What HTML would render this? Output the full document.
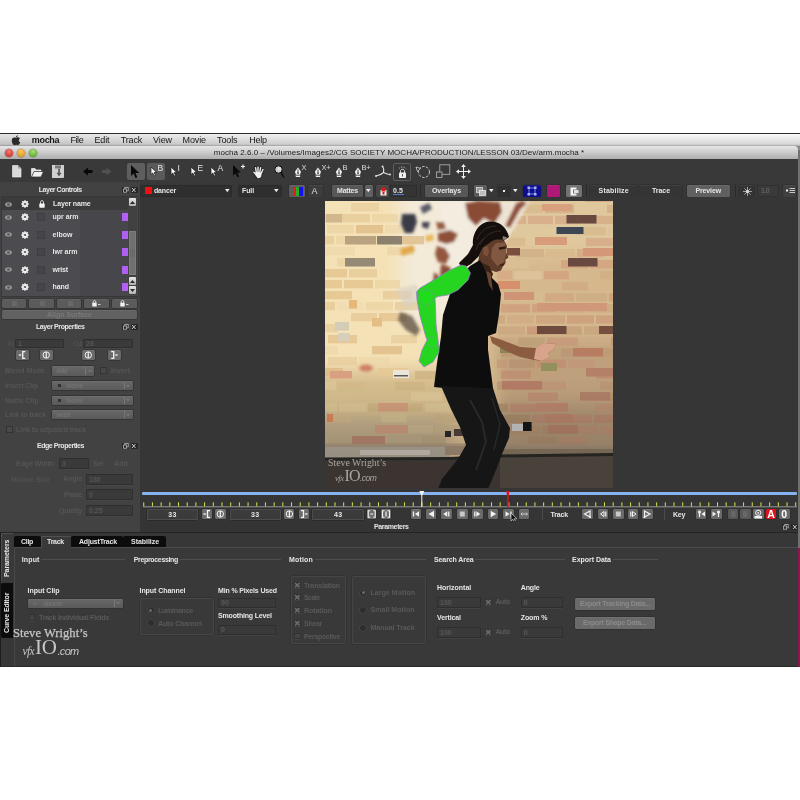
<!DOCTYPE html>
<html><head><meta charset="utf-8"><title>mocha</title>
<style>
html,body{margin:0;padding:0}
body{width:800px;height:800px;background:#fff;position:relative;overflow:hidden;font-family:"Liberation Sans",sans-serif}
.a{position:absolute}
.t{position:absolute;white-space:nowrap;line-height:1}
svg{position:absolute;overflow:visible}
</style></head><body>
<div id="root" style="position:absolute;left:0;top:0;width:800px;height:800px;will-change:transform">
<div class="a" style="left:0px;top:133px;width:800px;height:1px;background:#2c2c2c;"></div>
<div class="a" style="left:0px;top:134px;width:800px;height:12px;background:linear-gradient(to right,rgba(0,0,0,.09),rgba(0,0,0,0) 65%),linear-gradient(#fbfbfb 0%,#ececec 35%,#d6d6d8 85%,#a6a6a6 100%);"></div>
<div class="a" style="left:790px;top:146px;width:10px;height:6px;background:#8a8a8a;"></div>
<div class="a" style="left:0px;top:146px;width:798px;height:13px;background:linear-gradient(#e6e6e6,#d0d0d0 40%,#aeaeae);border-top-right-radius:4px"></div>
<div class="a" style="left:0px;top:159px;width:798px;height:508px;background:#383838;"></div>
<div class="a" style="left:798px;top:150px;width:2px;height:517px;background:#707070;"></div>
<svg style="left:11px;top:134.5px" width="10" height="11" viewBox="0 0 20 22"><path d="M13.5 0.5c0.2 1.8-1.6 4.2-3.6 4.1C9.7 2.8 11.6 0.7 13.5 0.500zM10 5.600c1.200 0 2.300-1 3.900-1c1.500 0 3 0.800 3.900 2.200c-3.300 1.900-2.800 6.600 0.700 7.900c-0.800 2.200-2.800 5.700-4.800 5.700c-1.300 0-1.900-0.800-3.500-0.800c-1.600 0-2.300 0.800-3.500 0.800C4.300 20.400 1.500 15.600 1.500 11.500c0-4 2.600-6.300 5-6.300c1.500 0 2.600 0.400 3.500 0.400z" fill="#2a2a2a"/></svg>
<span class="t" style="left:31.75px;top:135.8px;font-size:9px;color:#161616;font-weight:bold;letter-spacing:-0.30px;">mocha</span>
<span class="t" style="left:70.5px;top:135.8px;font-size:9px;color:#161616;font-weight:normal;letter-spacing:-0.44px;">File</span>
<span class="t" style="left:94.5px;top:135.8px;font-size:9px;color:#161616;font-weight:normal;letter-spacing:-0.19px;">Edit</span>
<span class="t" style="left:120.75px;top:135.8px;font-size:9px;color:#161616;font-weight:normal;letter-spacing:-0.18px;">Track</span>
<span class="t" style="left:153px;top:135.8px;font-size:9px;color:#161616;font-weight:normal;letter-spacing:-0.09px;">View</span>
<span class="t" style="left:182.5px;top:135.8px;font-size:9px;color:#161616;font-weight:normal;letter-spacing:-0.10px;">Movie</span>
<span class="t" style="left:217px;top:135.8px;font-size:9px;color:#161616;font-weight:normal;letter-spacing:-0.10px;">Tools</span>
<span class="t" style="left:249.25px;top:135.8px;font-size:9px;color:#161616;font-weight:normal;letter-spacing:-0.25px;">Help</span>
<div class="a" style="left:5px;top:149px;width:8px;height:8px;background:radial-gradient(circle at 50% 30%,#f47a70,#c8221c);border-radius:50%;box-shadow:0 0 0 0.5px rgba(0,0,0,.35)"></div>
<div class="a" style="left:17px;top:149px;width:8px;height:8px;background:radial-gradient(circle at 50% 30%,#f8c860,#d88a10);border-radius:50%;box-shadow:0 0 0 0.5px rgba(0,0,0,.35)"></div>
<div class="a" style="left:29px;top:149px;width:8px;height:8px;background:radial-gradient(circle at 50% 30%,#a8e070,#48a020);border-radius:50%;box-shadow:0 0 0 0.5px rgba(0,0,0,.35)"></div>
<span class="t" style="left:213.75px;top:149.3px;font-size:8px;color:#202020;font-weight:normal;letter-spacing:0.03px;">mocha 2.6.0 – /Volumes/Images2/CG SOCIETY MOCHA/PRODUCTION/LESSON 03/Dev/arm.mocha *</span>
<div class="a" style="left:0px;top:159px;width:798px;height:23px;background:#393939;"></div>
<div class="a" style="left:0px;top:181.5px;width:798px;height:1px;background:#464646;"></div>
<svg style="left:12px;top:165px" width="10" height="13" viewBox="0 0 10 13"><path d="M0.500 0.500h5.500l3 3v8.500h-8.500z" fill="#d8d8d8" stroke="#f4f4f4" stroke-width="0.600"/><path d="M6 0.500v3h3" fill="#9a9a9a"/></svg>
<svg style="left:31px;top:167px" width="13" height="11" viewBox="0 0 13 11"><path d="M0.500 9.500v-8h3.500l1 1.500h5v2" fill="#e4e4e4" stroke="#e4e4e4" stroke-width="0.800"/><path d="M0.500 10l2.500-5.500h9.500l-2.500 5.500z" fill="#f0f0f0" stroke="#2a2a2a" stroke-width="0.700"/></svg>
<svg style="left:52px;top:165px" width="12" height="13" viewBox="0 0 12 13"><rect x="0.500" y="0.500" width="11" height="12" fill="#cfcfcf" stroke="#eee" stroke-width="0.700"/><rect x="3" y="0.500" width="6" height="3" fill="#777"/><path d="M7.500 4v4h1.500l-2 3l-2-3h1.500v-4z" fill="#555" stroke="#333" stroke-width="0.400"/></svg>
<svg style="left:83px;top:167px" width="10" height="9" viewBox="0 0 10 9"><path d="M0 4.500l5-4v2.500h4.500v3h-4.500v2.500z" fill="#080808"/></svg>
<svg style="left:102px;top:167px" width="10" height="9" viewBox="0 0 10 9"><path d="M9.500 4.500l-5-4v2.500h-4.500v3h4.500v2.500z" fill="#505050"/></svg>
<div class="a" style="left:126.5px;top:162.5px;width:18.5px;height:17px;background:#5e5e5e;border-radius:2px"></div>
<div class="a" style="left:147px;top:162.5px;width:18px;height:17px;background:#5a5a5a;border-radius:2px"></div>
<svg style="left:131px;top:165px" width="9" height="14" viewBox="0 0 9 14"><path d="M0 0v11l2.600-2.400l1.900 4.400l1.900-0.800l-1.900-4.300h3.700z" fill="#0a0a0a"/></svg>
<svg style="left:151px;top:166.5px" width="7" height="10" viewBox="0 0 7 10"><path d="M0 0v11l2.600-2.400l1.900 4.400l1.900-0.800l-1.900-4.300h3.700z" fill="#f4f4f4" stroke="#1c1c1c" stroke-width="1" transform="scale(0.7)"/></svg>
<span class="t" style="left:157.5px;top:164.1px;font-size:8.5px;color:#e4e4e4;font-weight:normal;">B</span>
<svg style="left:171px;top:166.5px" width="7" height="10" viewBox="0 0 7 10"><path d="M0 0v11l2.600-2.400l1.900 4.400l1.900-0.800l-1.900-4.300h3.700z" fill="#f4f4f4" stroke="#1c1c1c" stroke-width="1" transform="scale(0.7)"/></svg>
<span class="t" style="left:177.5px;top:164.1px;font-size:8.5px;color:#e4e4e4;font-weight:normal;">I</span>
<svg style="left:191px;top:166.5px" width="7" height="10" viewBox="0 0 7 10"><path d="M0 0v11l2.600-2.400l1.900 4.400l1.900-0.800l-1.900-4.300h3.700z" fill="#f4f4f4" stroke="#1c1c1c" stroke-width="1" transform="scale(0.7)"/></svg>
<span class="t" style="left:197.5px;top:164.1px;font-size:8.5px;color:#e4e4e4;font-weight:normal;">E</span>
<svg style="left:211px;top:166.5px" width="7" height="10" viewBox="0 0 7 10"><path d="M0 0v11l2.600-2.400l1.900 4.400l1.900-0.800l-1.900-4.300h3.700z" fill="#f4f4f4" stroke="#1c1c1c" stroke-width="1" transform="scale(0.7)"/></svg>
<span class="t" style="left:217.5px;top:164.1px;font-size:8.5px;color:#e4e4e4;font-weight:normal;">A</span>
<svg style="left:233px;top:164px" width="12" height="14" viewBox="0 0 12 14"><path d="M0 0v11l2.600-2.400l1.900 4.400l1.900-0.800l-1.900-4.300h3.700z" fill="#0a0a0a" transform="translate(0,1) scale(0.95)"/><path d="M8 2.500h4M10 0.500v4" stroke="#f0f0f0" stroke-width="1.200"/></svg>
<svg style="left:252.5px;top:165.5px" width="11" height="13" viewBox="0 0 11 13"><path d="M3.300 6.500L2.600 1.600M5 6L5 0.900M6.800 6.200L7.600 1.600M8.400 7L9.900 3.400M3 8.600L0.900 6.200" stroke="#1a1a1a" stroke-width="2.600" stroke-linecap="round" fill="none"/><path d="M2.600 5.800L8.900 6.400L8.200 10.800Q6.200 13 4.400 12L2.300 9Z" fill="#1a1a1a" stroke="#1a1a1a" stroke-width="1.400"/><path d="M3.300 6.500L2.600 1.600M5 6L5 0.900M6.800 6.200L7.600 1.600M8.400 7L9.900 3.400M3 8.600L0.900 6.200" stroke="#f2f2f2" stroke-width="1.400" stroke-linecap="round" fill="none"/><path d="M2.600 5.800L8.900 6.400L8.200 10.800Q6.200 13 4.400 12L2.300 9Z" fill="#f2f2f2"/></svg>
<svg style="left:273.7px;top:164.7px" width="11" height="13" viewBox="0 0 11 13"><circle cx="4.500" cy="4.500" r="3.700" fill="#cfcfcf" stroke="#0c0c0c" stroke-width="1"/><circle cx="5.500" cy="3.500" r="1.600" fill="#e6e6e6"/><path d="M7.300 7.600l2.300 4.400" stroke="#0c0c0c" stroke-width="1.500" stroke-linecap="round"/></svg>
<svg style="left:293.5px;top:167px" width="8" height="11" viewBox="0 0 8 11"><path d="M2 11.500h5v-3.500l1-2.500l-3.500-5l-3.500 5l1 2.500z" fill="#f2f2f2" transform="scale(0.88)"/><path d="M4 2.500v3.500" stroke="#222" stroke-width="0.800"/><circle cx="4" cy="6.200" r="0.800" fill="#222"/><path d="M1.800 8.200h4.400" stroke="#222" stroke-width="0.800"/></svg>
<span class="t" style="left:301.5px;top:163.6px;font-size:7.5px;color:#dcdcdc;font-weight:normal;letter-spacing:-0.300px">X</span>
<svg style="left:313.5px;top:167px" width="8" height="11" viewBox="0 0 8 11"><path d="M2 11.500h5v-3.500l1-2.500l-3.500-5l-3.500 5l1 2.500z" fill="#f2f2f2" transform="scale(0.88)"/><path d="M4 2.500v3.500" stroke="#222" stroke-width="0.800"/><circle cx="4" cy="6.200" r="0.800" fill="#222"/><path d="M1.800 8.200h4.400" stroke="#222" stroke-width="0.800"/></svg>
<span class="t" style="left:321.5px;top:163.6px;font-size:7.5px;color:#dcdcdc;font-weight:normal;letter-spacing:-0.300px">X+</span>
<svg style="left:334.5px;top:167px" width="8" height="11" viewBox="0 0 8 11"><path d="M2 11.500h5v-3.500l1-2.500l-3.500-5l-3.500 5l1 2.500z" fill="#f2f2f2" transform="scale(0.88)"/><path d="M4 2.500v3.500" stroke="#222" stroke-width="0.800"/><circle cx="4" cy="6.200" r="0.800" fill="#222"/><path d="M1.800 8.200h4.400" stroke="#222" stroke-width="0.800"/></svg>
<span class="t" style="left:342.5px;top:163.6px;font-size:7.5px;color:#dcdcdc;font-weight:normal;letter-spacing:-0.300px">B</span>
<svg style="left:353.5px;top:167px" width="8" height="11" viewBox="0 0 8 11"><path d="M2 11.500h5v-3.500l1-2.500l-3.500-5l-3.500 5l1 2.500z" fill="#f2f2f2" transform="scale(0.88)"/><path d="M4 2.500v3.500" stroke="#222" stroke-width="0.800"/><circle cx="4" cy="6.200" r="0.800" fill="#222"/><path d="M1.800 8.200h4.400" stroke="#222" stroke-width="0.800"/></svg>
<span class="t" style="left:361.5px;top:163.6px;font-size:7.5px;color:#dcdcdc;font-weight:normal;letter-spacing:-0.300px">B+</span>
<svg style="left:374px;top:165px" width="18" height="13" viewBox="0 0 18 13"><path d="M2 11c3-0.500 5.500-1.500 7.500-3.500M9.500 7.500c0.500-2.500 0.500-4.500-1-6.500M9.500 7.500c2 1 4 2.200 6.500 2" fill="none" stroke="#e4e4e4" stroke-width="1.100"/><circle cx="2" cy="11" r="0.900" fill="#e4e4e4"/><circle cx="8.500" cy="1.500" r="0.900" fill="#e4e4e4"/><circle cx="16" cy="9.500" r="0.900" fill="#e4e4e4"/></svg>
<div class="a" style="left:393px;top:162.5px;width:17.5px;height:18px;background:transparent;border:0.8px solid #5e5e5e;border-radius:2px;box-sizing:border-box"></div>
<svg style="left:398px;top:165px" width="9" height="14" viewBox="0 0 9 14"><path d="M1 3.500c1.500-2 5.500-2 7 0" fill="none" stroke="#c8c8c8" stroke-width="0.700" stroke-dasharray="1.500 0.800"/><path d="M2.500 8v-1.800c0-2.600 4-2.600 4 0v1.800" fill="none" stroke="#ececec" stroke-width="0.900"/><rect x="1" y="7.500" width="7" height="5.500" rx="0.800" fill="#f0f0f0"/><rect x="4" y="9" width="1" height="2.500" fill="#555"/></svg>
<svg style="left:415px;top:164px" width="16" height="15" viewBox="0 0 16 15"><circle cx="9" cy="8" r="5.500" fill="none" stroke="#d4d4d4" stroke-width="0.900" stroke-dasharray="2.600 1.300"/><path d="M1 3l4.500 1.500l-3 3z" fill="#343434" stroke="#d4d4d4" stroke-width="0.800"/></svg>
<svg style="left:436px;top:164px" width="15" height="15" viewBox="0 0 15 15"><rect x="3.800" y="0.800" width="10" height="9.500" fill="none" stroke="#b4b4b4" stroke-width="0.800"/><rect x="0.500" y="8" width="5.500" height="5.500" fill="#3c3c3c" stroke="#b4b4b4" stroke-width="0.800"/></svg>
<svg style="left:456px;top:164px" width="15" height="15" viewBox="0 0 15 15"><path d="M7.500 1v13M1 7.500h13" stroke="#f0f0f0" stroke-width="1"/><path d="M7.500 0l-2.300 3h4.600zM7.500 15l-2.300-3h4.600zM0 7.500l3-2.300v4.600zM15 7.500l-3-2.300v4.600z" fill="#f0f0f0"/></svg>
<div class="a" style="left:0px;top:182px;width:798px;height:15px;background:#383838;"></div>
<div class="a" style="left:140px;top:185px;width:92px;height:12px;background:#2f2f2f;border-radius:2px;box-shadow:inset 0 0 0 0.5px #262626, 0 0.5px 0 #4a4a4a"></div>
<div class="a" style="left:145px;top:187px;width:6.5px;height:6.5px;background:#f01010;"></div>
<span class="t" style="left:154px;top:186.7px;font-size:7px;color:#e6e6e6;font-weight:bold;letter-spacing:-0.16px;">dancer</span>
<svg style="left:225px;top:189px" width="4.6" height="3.2" viewBox="0 0 4.6 3.2"><path d="M0 0h4.6l-2.3 3.2z" fill="#ececec"/></svg>
<div class="a" style="left:238px;top:185px;width:44px;height:12px;background:#2f2f2f;border-radius:2px;box-shadow:inset 0 0 0 0.5px #262626, 0 0.5px 0 #4a4a4a"></div>
<span class="t" style="left:242px;top:186.7px;font-size:7px;color:#e6e6e6;font-weight:bold;letter-spacing:-0.11px;">Full</span>
<svg style="left:274px;top:189px" width="4.6" height="3.2" viewBox="0 0 4.6 3.2"><path d="M0 0h4.6l-2.3 3.2z" fill="#ececec"/></svg>
<div class="a" style="left:289px;top:185px;width:16px;height:11.5px;background:#5c5c5c;border-radius:1.500px;box-shadow:inset 0 0.500px 0 rgba(255,255,255,.12),0 0 0 0.500px #2a2a2a;"></div>
<div class="a" style="left:293px;top:186.5px;width:3px;height:9px;background:#e02020;"></div>
<div class="a" style="left:296px;top:186.5px;width:3px;height:9px;background:#20b020;"></div>
<div class="a" style="left:299px;top:186.5px;width:3.5px;height:9px;background:#1010f0;"></div>
<div class="a" style="left:308px;top:185px;width:15px;height:11.5px;background:#3c3c3c;border-radius:1.500px;box-shadow:inset 0 0.500px 0 rgba(255,255,255,.12),0 0 0 0.500px #2a2a2a;"></div>
<span class="t" style="left:311.5px;top:186.6px;font-size:9px;color:#dcdcdc;font-weight:normal;">A</span>
<div class="a" style="left:332px;top:185px;width:30.5px;height:11.5px;background:#575757;border-radius:1.500px;box-shadow:inset 0 0.500px 0 rgba(255,255,255,.12),0 0 0 0.500px #2a2a2a;"></div>
<span class="t" style="left:337px;top:186.7px;font-size:7px;color:#e6e6e6;font-weight:bold;letter-spacing:-0.20px;">Mattes</span>
<div class="a" style="left:365px;top:185px;width:7.5px;height:11.5px;background:#606060;border-radius:1.500px;box-shadow:inset 0 0.500px 0 rgba(255,255,255,.12),0 0 0 0.500px #2a2a2a;"></div>
<svg style="left:366.3px;top:189px" width="4.6" height="3.2" viewBox="0 0 4.6 3.2"><path d="M0 0h4.6l-2.3 3.2z" fill="#ececec"/></svg>
<div class="a" style="left:376px;top:185px;width:13px;height:11.5px;background:#474747;border-radius:1.500px;box-shadow:inset 0 0.500px 0 rgba(255,255,255,.12),0 0 0 0.500px #2a2a2a;"></div>
<svg style="left:380px;top:186.5px" width="7" height="9" viewBox="0 0 7 9"><rect x="0.500" y="3" width="6" height="5.500" fill="#f0f0f0"/><rect x="1.500" y="0.500" width="4" height="4" fill="#e01818"/><rect x="2.500" y="5" width="2" height="2.500" fill="#c02020"/></svg>
<div class="a" style="left:389.5px;top:185px;width:27px;height:12px;background:#343434;border-radius:2px;box-shadow:inset 0 0 0 0.5px #262626, 0 0.5px 0 #4a4a4a"></div>
<span class="t" style="left:393px;top:186.7px;font-size:7px;color:#e6e6e6;font-weight:bold;letter-spacing:0.09px;">0.5</span>
<div class="a" style="left:392.5px;top:194px;width:11px;height:0.8px;background:#5a78c8;"></div>
<div class="a" style="left:420px;top:184px;width:1px;height:13px;background:#2a2a2a;"></div>
<div class="a" style="left:425px;top:185px;width:43px;height:11.5px;background:#575757;border-radius:1.500px;box-shadow:inset 0 0.500px 0 rgba(255,255,255,.12),0 0 0 0.500px #2a2a2a;"></div>
<span class="t" style="left:432px;top:186.7px;font-size:7px;color:#e6e6e6;font-weight:bold;letter-spacing:-0.07px;">Overlays</span>
<div class="a" style="left:474px;top:185px;width:13px;height:11.5px;background:#5a5a5a;border-radius:1.500px;box-shadow:inset 0 0.500px 0 rgba(255,255,255,.12),0 0 0 0.500px #2a2a2a;"></div>
<svg style="left:476px;top:186.5px" width="10" height="9" viewBox="0 0 10 9"><rect x="0.500" y="0.500" width="6" height="5" fill="#999" stroke="#e8e8e8" stroke-width="0.700"/><rect x="3.500" y="3.500" width="6" height="5" fill="#bbb" stroke="#f4f4f4" stroke-width="0.700"/></svg>
<svg style="left:489px;top:189px" width="4.6" height="3.2" viewBox="0 0 4.6 3.2"><path d="M0 0h4.6l-2.3 3.2z" fill="#ececec"/></svg>
<div class="a" style="left:498px;top:185px;width:12px;height:11.5px;background:#303030;border-radius:1.500px;box-shadow:inset 0 0.500px 0 rgba(255,255,255,.12),0 0 0 0.500px #2a2a2a;"></div>
<div class="a" style="left:503px;top:189.5px;width:2px;height:2px;background:#f0f0f0;"></div>
<div class="a" style="left:504.5px;top:188.8px;width:1px;height:1px;background:#d02020;"></div>
<svg style="left:512.5px;top:189px" width="4.6" height="3.2" viewBox="0 0 4.6 3.2"><path d="M0 0h4.6l-2.3 3.2z" fill="#ececec"/></svg>
<div class="a" style="left:523px;top:185px;width:17.5px;height:11.5px;background:#0e0e8c;border-radius:1.500px;box-shadow:inset 0 0.500px 0 rgba(255,255,255,.12),0 0 0 0.500px #2a2a2a;"></div>
<svg style="left:527px;top:186px" width="10" height="10" viewBox="0 0 10 10"><rect x="2" y="2" width="6" height="6" fill="none" stroke="#8898e8" stroke-width="0.900"/><path d="M0.500 0.500h2.500v2.500h-2.500zM7 0.500h2.500v2.500h-2.500zM0.500 7h2.500v2.500h-2.500zM7 7h2.500v2.500h-2.500z" fill="#a8b4f0"/></svg>
<div class="a" style="left:547px;top:185px;width:12.5px;height:11.5px;background:#b01878;border-radius:1.500px;box-shadow:inset 0 0.500px 0 rgba(255,255,255,.12),0 0 0 0.500px #2a2a2a;"></div>
<div class="a" style="left:566px;top:185px;width:16px;height:11.5px;background:#727272;border-radius:1.500px;box-shadow:inset 0 0.500px 0 rgba(255,255,255,.12),0 0 0 0.500px #2a2a2a;"></div>
<svg style="left:569.5px;top:186.5px" width="9" height="9" viewBox="0 0 9 9"><path d="M0.500 0.500h6v2h-3.500v4h3.500v2h-6z" fill="#f4f4f4"/><rect x="4" y="3" width="4.500" height="3" fill="#e0e0e0"/></svg>
<div class="a" style="left:586px;top:184px;width:1px;height:13px;background:#2a2a2a;"></div>
<div class="a" style="left:590px;top:185px;width:47px;height:11.5px;background:#353535;border-radius:1.500px;box-shadow:inset 0 0.500px 0 rgba(255,255,255,.12),0 0 0 0.500px #2a2a2a;"></div>
<span class="t" style="left:598.5px;top:186.7px;font-size:7px;color:#e6e6e6;font-weight:bold;letter-spacing:0.23px;">Stabilize</span>
<div class="a" style="left:640px;top:185px;width:42px;height:11.5px;background:#353535;border-radius:1.500px;box-shadow:inset 0 0.500px 0 rgba(255,255,255,.12),0 0 0 0.500px #2a2a2a;"></div>
<span class="t" style="left:652px;top:186.7px;font-size:7px;color:#e6e6e6;font-weight:bold;letter-spacing:-0.06px;">Trace</span>
<div class="a" style="left:687px;top:185px;width:42.5px;height:11.5px;background:#606060;border-radius:1.500px;box-shadow:inset 0 0.500px 0 rgba(255,255,255,.12),0 0 0 0.500px #2a2a2a;"></div>
<span class="t" style="left:695.5px;top:186.7px;font-size:7px;color:#e6e6e6;font-weight:bold;letter-spacing:-0.14px;">Preview</span>
<div class="a" style="left:735px;top:184px;width:1px;height:13px;background:#2a2a2a;"></div>
<div class="a" style="left:739px;top:185px;width:15px;height:11.5px;background:#333;border-radius:1.500px;box-shadow:inset 0 0.500px 0 rgba(255,255,255,.12),0 0 0 0.500px #2a2a2a;"></div>
<svg style="left:742.5px;top:186.5px" width="9" height="9" viewBox="0 0 9 9"><circle cx="4.500" cy="4.500" r="1.800" fill="#dcdcdc"/><path d="M4.500 0v9M0 4.500h9M1.300 1.300l6.400 6.400M7.700 1.300l-6.400 6.400" stroke="#cfcfcf" stroke-width="0.700"/></svg>
<div class="a" style="left:757px;top:185px;width:22px;height:12px;background:#3a3a3a;border-radius:2px;box-shadow:inset 0 0 0 0.5px #262626, 0 0.5px 0 #4a4a4a"></div>
<span class="t" style="left:761px;top:186.7px;font-size:7px;color:#606060;font-weight:bold;letter-spacing:-0.58px;">1.0</span>
<div class="a" style="left:783px;top:185px;width:13px;height:11.5px;background:#404040;border-radius:1.500px;box-shadow:inset 0 0.500px 0 rgba(255,255,255,.12),0 0 0 0.500px #2a2a2a;"></div>
<svg style="left:785.5px;top:187px" width="9" height="8" viewBox="0 0 9 8"><rect x="0" y="2.500" width="2" height="2" fill="#f0f0f0"/><path d="M3.500 1.500h5.500M3.500 3.500h5.500M3.500 5.500h5.500" stroke="#c8c8c8" stroke-width="1"/></svg>
<div class="a" style="left:140px;top:197px;width:658px;height:294px;background:#363636;"></div>
<svg style="left:325px;top:201px" width="288" height="287" viewBox="325 201 288 287"><defs><clipPath id="pc"><rect x="325" y="201" width="288" height="287"/></clipPath><filter id="b8" x="-20%" y="-20%" width="140%" height="140%"><feGaussianBlur stdDeviation="8"/></filter><filter id="b4" x="-20%" y="-20%" width="140%" height="140%"><feGaussianBlur stdDeviation="4"/></filter><filter id="b2" x="-20%" y="-20%" width="140%" height="140%"><feGaussianBlur stdDeviation="1.6"/></filter><filter id="b1" x="-20%" y="-20%" width="140%" height="140%"><feGaussianBlur stdDeviation="0.7"/></filter><filter id="b05" x="-10%" y="-10%" width="120%" height="120%"><feGaussianBlur stdDeviation="0.45"/></filter><linearGradient id="vg" x1="0" y1="0" x2="0" y2="1"><stop offset="0.62" stop-color="#000" stop-opacity="0"/><stop offset="0.9" stop-color="#000" stop-opacity="0.14"/></linearGradient></defs><g clip-path="url(#pc)"><rect x="325" y="201" width="288" height="287" fill="#d8bc90"/><g filter="url(#b8)"><rect x="305" y="185" width="155" height="185" fill="#f4e1b6"/><rect x="400" y="185" width="78" height="140" fill="#f3ead8"/><rect x="305" y="376" width="145" height="40" fill="#d6be8e"/><rect x="305" y="416" width="145" height="40" fill="#bca888"/><rect x="497" y="185" width="135" height="70" fill="#e0c89e"/><rect x="497" y="255" width="135" height="85" fill="#d6b88e"/><rect x="497" y="340" width="135" height="70" fill="#bea07c"/><rect x="497" y="405" width="135" height="50" fill="#ac9274"/></g><g filter="url(#b1)" opacity="0.7"><rect x="497" y="193.7" width="26" height="8.300" fill="#d8b88c"/><rect x="525" y="193.7" width="31" height="8.300" fill="#dcc298"/><rect x="585" y="193.7" width="26" height="8.300" fill="#d49e7c"/><rect x="613" y="193.7" width="25" height="8.300" fill="#cfae84"/><rect x="497" y="204.8" width="14" height="8.300" fill="#d2a882"/><rect x="513" y="204.8" width="30" height="8.300" fill="#d8b88c"/><rect x="545" y="204.8" width="29" height="8.300" fill="#d2a882"/><rect x="607" y="204.8" width="27" height="8.300" fill="#cfae84"/><rect x="499" y="215.8" width="27" height="8.300" fill="#d6a684"/><rect x="528" y="215.8" width="25" height="8.300" fill="#d6a684"/><rect x="555" y="215.8" width="27" height="8.300" fill="#d6a684"/><rect x="584" y="215.8" width="29" height="8.300" fill="#d2a882"/><rect x="497" y="226.9" width="17" height="8.300" fill="#dcc298"/><rect x="547" y="226.9" width="27" height="8.300" fill="#e0c8a0"/><rect x="576" y="226.9" width="30" height="8.300" fill="#d8b88c"/><rect x="608" y="226.9" width="27" height="8.300" fill="#dcc298"/><rect x="498" y="237.9" width="27" height="8.300" fill="#d8b88c"/><rect x="527" y="237.9" width="29" height="8.300" fill="#e0c8a0"/><rect x="586" y="237.9" width="28" height="8.300" fill="#d6a684"/><rect x="497" y="249.0" width="18" height="8.300" fill="#e0c8a0"/><rect x="517" y="249.0" width="27" height="8.300" fill="#cfae84"/><rect x="546" y="249.0" width="29" height="8.300" fill="#d8b88c"/><rect x="577" y="249.0" width="27" height="8.300" fill="#d6a684"/><rect x="606" y="249.0" width="25" height="8.300" fill="#dcc298"/><rect x="499" y="260.0" width="30" height="8.300" fill="#dcc298"/><rect x="561" y="260.0" width="27" height="8.300" fill="#d49e7c"/><rect x="590" y="260.0" width="26" height="8.300" fill="#d49e7c"/><rect x="497" y="271.1" width="15" height="8.300" fill="#d6a684"/><rect x="514" y="271.1" width="28" height="8.300" fill="#e0c8a0"/><rect x="544" y="271.1" width="25" height="8.300" fill="#d49e7c"/><rect x="600" y="271.1" width="31" height="8.300" fill="#cfae84"/><rect x="562" y="282.1" width="26" height="8.300" fill="#d1a781"/><rect x="590" y="282.1" width="26" height="8.300" fill="#d7b78b"/><rect x="497" y="293.2" width="18" height="8.300" fill="#d8bd94"/><rect x="517" y="293.2" width="26" height="8.300" fill="#d7bd93"/><rect x="545" y="293.2" width="29" height="8.300" fill="#cfa47f"/><rect x="576" y="293.2" width="31" height="8.300" fill="#ccaa81"/><rect x="609" y="293.2" width="30" height="8.300" fill="#d19b7a"/><rect x="501" y="304.2" width="29" height="8.300" fill="#cf9a7a"/><rect x="532" y="304.2" width="25" height="8.300" fill="#ce9b79"/><rect x="559" y="304.2" width="26" height="8.300" fill="#cda37f"/><rect x="587" y="304.2" width="26" height="8.300" fill="#caa880"/><rect x="497" y="315.3" width="8" height="8.300" fill="#c7a57e"/><rect x="507" y="315.3" width="27" height="8.300" fill="#cfaa83"/><rect x="536" y="315.3" width="29" height="8.300" fill="#cb9f7d"/><rect x="567" y="315.3" width="27" height="8.300" fill="#cb9978"/><rect x="596" y="315.3" width="25" height="8.300" fill="#cd9979"/><rect x="498" y="326.3" width="27" height="8.300" fill="#cba580"/><rect x="527" y="326.3" width="27" height="8.300" fill="#c99375"/><rect x="556" y="326.3" width="26" height="8.300" fill="#c29c78"/><rect x="584" y="326.3" width="27" height="8.300" fill="#c5a37c"/><rect x="613" y="326.3" width="31" height="8.300" fill="#c99d7c"/><rect x="497" y="337.4" width="19" height="8.300" fill="#cca785"/><rect x="518" y="337.4" width="27" height="8.300" fill="#bc9d77"/><rect x="547" y="337.4" width="31" height="8.300" fill="#c89679"/><rect x="580" y="337.4" width="29" height="8.300" fill="#ceab8a"/><rect x="611" y="337.4" width="31" height="8.300" fill="#c69174"/><rect x="501" y="348.4" width="26" height="8.300" fill="#bf9472"/><rect x="529" y="348.4" width="30" height="8.300" fill="#c1a27a"/><rect x="561" y="348.4" width="28" height="8.300" fill="#bc9574"/><rect x="591" y="348.4" width="27" height="8.300" fill="#c09876"/><rect x="497" y="359.5" width="10" height="8.300" fill="#c39778"/><rect x="509" y="359.5" width="26" height="8.300" fill="#b78f6e"/><rect x="537" y="359.5" width="29" height="8.300" fill="#c18c70"/><rect x="568" y="359.5" width="27" height="8.300" fill="#c39778"/><rect x="501" y="370.5" width="30" height="8.300" fill="#bf8b70"/><rect x="533" y="370.5" width="28" height="8.300" fill="#c09f7c"/><rect x="596" y="370.5" width="30" height="8.300" fill="#be896f"/><rect x="497" y="381.6" width="13" height="8.300" fill="#b99472"/><rect x="512" y="381.6" width="26" height="8.300" fill="#bb876d"/><rect x="540" y="381.6" width="26" height="8.300" fill="#be9475"/><rect x="600" y="381.6" width="26" height="8.300" fill="#b99472"/><rect x="528" y="392.6" width="30" height="8.300" fill="#bb886f"/><rect x="590" y="392.6" width="26" height="8.300" fill="#b79170"/><rect x="497" y="403.7" width="11" height="8.300" fill="#a68867"/><rect x="510" y="403.7" width="27" height="8.300" fill="#b8836c"/><rect x="595" y="403.7" width="30" height="8.300" fill="#bb8e72"/><rect x="501" y="414.7" width="29" height="8.300" fill="#a28565"/><rect x="532" y="414.7" width="29" height="8.300" fill="#b5816a"/><rect x="563" y="414.7" width="29" height="8.300" fill="#b6836c"/><rect x="594" y="414.7" width="26" height="8.300" fill="#b38069"/><rect x="497" y="425.8" width="12" height="8.300" fill="#a08464"/><rect x="511" y="425.8" width="29" height="8.300" fill="#b08c6c"/><rect x="542" y="425.8" width="29" height="8.300" fill="#a88a68"/><rect x="573" y="425.8" width="25" height="8.300" fill="#b88a70"/><rect x="600" y="425.8" width="29" height="8.300" fill="#b88a70"/><rect x="528" y="436.8" width="29" height="8.300" fill="#a88a68"/><rect x="559" y="436.8" width="28" height="8.300" fill="#b88a70"/><rect x="415" y="371.0" width="26" height="8.300" fill="#ccb080"/><rect x="443" y="371.0" width="28" height="8.300" fill="#e0ca9c"/><rect x="320" y="381.8" width="16" height="8.300" fill="#e0ca9c"/><rect x="338" y="381.8" width="27" height="8.300" fill="#d6bc8c"/><rect x="395" y="381.8" width="30" height="8.300" fill="#d0b684"/><rect x="325" y="392.6" width="26" height="8.300" fill="#d8c090"/><rect x="411" y="392.6" width="31" height="8.300" fill="#e0ca9c"/><rect x="320" y="403.4" width="17" height="8.300" fill="#dcc698"/><rect x="339" y="403.4" width="27" height="8.300" fill="#dcc698"/><rect x="368" y="403.4" width="25" height="8.300" fill="#ccb080"/><rect x="395" y="403.4" width="28" height="8.300" fill="#ccb080"/><rect x="425" y="403.4" width="27" height="8.300" fill="#dcc698"/><rect x="326" y="414.2" width="25" height="8.300" fill="#ccb488"/><rect x="381" y="414.2" width="25" height="8.300" fill="#d1bc92"/><rect x="435" y="414.2" width="26" height="8.300" fill="#c7af82"/><rect x="375" y="425.0" width="27" height="8.300" fill="#c0aa83"/><rect x="404" y="425.0" width="29" height="8.300" fill="#c7b38e"/><rect x="435" y="425.0" width="27" height="8.300" fill="#c3ad87"/><rect x="328" y="435.8" width="30" height="8.300" fill="#b8a482"/><rect x="389" y="435.8" width="30" height="8.300" fill="#b9a685"/><rect x="421" y="435.8" width="25" height="8.300" fill="#b5a07e"/><rect x="351" y="203.0" width="28" height="8.300" fill="#e8cc9a"/><rect x="320" y="214.0" width="18" height="8.300" fill="#e8cc9a"/><rect x="340" y="214.0" width="30" height="8.300" fill="#e6c894"/><rect x="372" y="214.0" width="26" height="8.300" fill="#ecd4a2"/><rect x="327" y="225.0" width="27" height="8.300" fill="#ecd4a2"/><rect x="356" y="225.0" width="27" height="8.300" fill="#dcb880"/><rect x="385" y="225.0" width="26" height="8.300" fill="#eed8aa"/><rect x="320" y="236.0" width="14" height="8.300" fill="#e6c894"/><rect x="336" y="236.0" width="30" height="8.300" fill="#ecd4a2"/><rect x="368" y="236.0" width="29" height="8.300" fill="#f0dcb0"/><rect x="399" y="236.0" width="25" height="8.300" fill="#dcb880"/><rect x="325" y="247.0" width="30" height="8.300" fill="#eed8aa"/><rect x="387" y="247.0" width="27" height="8.300" fill="#ecd4a2"/><rect x="337" y="258.0" width="30" height="8.300" fill="#ecd4a2"/><rect x="322" y="269.0" width="25" height="8.300" fill="#e2c088"/><rect x="349" y="269.0" width="28" height="8.300" fill="#e6c894"/><rect x="320" y="280.0" width="22" height="8.300" fill="#e2c088"/><rect x="344" y="280.0" width="29" height="8.300" fill="#e2c088"/><rect x="375" y="280.0" width="25" height="8.300" fill="#ecd4a2"/><rect x="324" y="291.0" width="28" height="8.300" fill="#e2c088"/><rect x="383" y="291.0" width="29" height="8.300" fill="#e6c894"/><rect x="320" y="302.0" width="15" height="8.300" fill="#e6c894"/><rect x="337" y="302.0" width="27" height="8.300" fill="#f0dcb0"/><rect x="366" y="302.0" width="27" height="8.300" fill="#ecd4a2"/><rect x="395" y="302.0" width="26" height="8.300" fill="#e6c894"/><rect x="351" y="313.0" width="26" height="8.300" fill="#e6c894"/><rect x="379" y="313.0" width="28" height="8.300" fill="#e2c088"/><rect x="320" y="324.0" width="18" height="8.300" fill="#e8cc9a"/><rect x="328" y="335.0" width="29" height="8.300" fill="#e2c088"/><rect x="391" y="335.0" width="26" height="8.300" fill="#e8cc9a"/><rect x="320" y="346.0" width="18" height="8.300" fill="#eed8aa"/><rect x="372" y="346.0" width="30" height="8.300" fill="#dcb880"/><rect x="328" y="357.0" width="29" height="8.300" fill="#e8cc9a"/><rect x="359" y="357.0" width="31" height="8.300" fill="#eed8aa"/><rect x="320" y="368.0" width="23" height="8.300" fill="#dcb880"/><rect x="377" y="368.0" width="30" height="8.300" fill="#e6c894"/><rect x="326" y="214" width="16" height="8.500" fill="#c4a67e"/><rect x="345" y="236" width="31" height="8.500" fill="#a08868"/><rect x="377" y="236" width="25" height="8.500" fill="#5e584e"/><rect x="345" y="258" width="30" height="8.500" fill="#6c665c"/><rect x="349" y="300" width="8" height="8.500" fill="#e0a860"/><rect x="372" y="318" width="10" height="8.500" fill="#e0b070"/><rect x="335" y="322" width="14" height="8.500" fill="#c8c4b8"/><rect x="338" y="333" width="12" height="8.500" fill="#ccc8bc"/></g><g filter="url(#b1)"><rect x="566.5" y="215" width="30" height="8.5" fill="#6a4a40"/><rect x="568" y="258" width="29.5" height="8.5" fill="#694840"/><rect x="537" y="326" width="29.5" height="8" fill="#6e4a3e"/><rect x="599" y="326" width="15" height="8" fill="#76503f"/><rect x="507" y="248" width="13" height="7.5" fill="#7a5040"/><rect x="556.5" y="227" width="27" height="7" fill="#3e4652"/><rect x="542" y="204" width="30" height="7" fill="#d8a07c"/><rect x="535" y="237" width="32" height="8" fill="#d89c7a"/><rect x="583" y="248" width="30" height="8" fill="#d49878"/><rect x="498" y="281" width="22" height="8" fill="#d8906c"/><rect x="504" y="292" width="30" height="8" fill="#cf9474"/><rect x="537" y="303" width="70" height="8" fill="#d0987a"/><rect x="573" y="348" width="30" height="8.5" fill="#b87c64"/><rect x="586" y="368" width="27" height="8.5" fill="#b48068"/><rect x="502" y="381" width="40" height="8.5" fill="#b47c66"/><rect x="536" y="403" width="32" height="8.5" fill="#b8846c"/><rect x="545" y="414" width="28" height="8.5" fill="#b4806a"/><rect x="580" y="392" width="30" height="8.5" fill="#b08068"/><rect x="548" y="425" width="30" height="8.5" fill="#ae7e66"/><rect x="523" y="422" width="8.6" height="9" fill="#141416"/><rect x="512" y="424" width="11" height="7" fill="#c4c4c4"/><rect x="445" y="431" width="6" height="6" fill="#2a2a2e"/><rect x="454" y="429" width="10" height="7" fill="#50403c"/><rect x="393" y="370" width="16" height="8" fill="#ece6da"/><rect x="394" y="375" width="14" height="1.5" fill="#5a5a58"/><rect x="378" y="403" width="30" height="8.5" fill="#d09c7c"/><rect x="375" y="425" width="33" height="8.5" fill="#c8987a"/><rect x="352" y="436" width="33" height="8" fill="#b4846e"/><rect x="330" y="371" width="22" height="7.5" fill="#d8a080"/><rect x="327" y="414" width="6" height="8" fill="#d8845c"/><rect x="500" y="345" width="16" height="8" fill="#8c8458"/><rect x="541" y="363" width="16" height="8" fill="#94905c"/></g><g filter="url(#b2)"><path d="M440 201L530 201L512 232L500 250L470 262L446 262L440 240Z" fill="#f2ece0" opacity=".85"/><path d="M465 203L478 201L500 202L502 212L494 224L484 218L476 226L468 218Z" fill="#8a4c36"/><path d="M522 201L516 203L505 226L510 228L520 210L527 203Z" fill="#8e5038"/><path d="M436 222l8 0l2 7l-8 1z" fill="#965c40"/><path d="M438 233l12-3l8 4l-4 8l-8 2l-8-3z" fill="#8e5038"/><path d="M437 246l8 2l5 8l-4 8l-8-2l-3-8z" fill="#94563c"/><path d="M441 264l9 3l2 10l-6 6l-6-8z" fill="#8a5038"/><path d="M434 272l5 4l-1 14l-5-4z" fill="#8a5038"/><path d="M402 214l13 0l2 8l-4 11l-8 0l-4-9z" fill="#3a3a46"/><path d="M420 207l9-4l3 6l-9 5z" fill="#5a5a68"/><path d="M422 222l8 0l-2 7l-6-2z" fill="#444452"/><path d="M400 249l13-4l2 6l-13 5z" fill="#e0a848"/><path d="M425 236l8-2l1 6l-8 2z" fill="#e8b858"/><path d="M400 312l12 4l8 14l-4 6l-10-6l-8-10z" fill="#5a4c3e" opacity=".75"/><path d="M396 290l20-6l6 16l-16 10z" fill="#d8d0c0" opacity=".7"/><ellipse cx="366" cy="368" rx="7" ry="3.500" fill="#c46450" opacity=".75"/></g><g filter="url(#b1)"><rect x="320" y="446" width="130" height="12" fill="#aea696"/><rect x="360" y="450" width="70" height="5" fill="#c8c2b6"/><rect x="445" y="446" width="175" height="9" fill="#a08c74"/><rect x="500" y="449" width="120" height="6" fill="#7c6a58" opacity=".7"/><rect x="320" y="443.500" width="300" height="3.500" fill="#a48e76" opacity=".7"/><path d="M320 458.500L450 458L500 455L620 453.500L620 495L320 495Z" fill="#443e39"/><path d="M500 456L620 454.500L620 495L500 495Z" fill="#564d45"/><path d="M320 457.500L450 457L500 454.500L620 453L620 456L500 457.500L450 460L320 460.500Z" fill="#2c2a28"/></g><rect x="325" y="201" width="288" height="287" fill="url(#vg)"/><g filter="url(#b05)"><path d="M490 336l12 4l18 7l16 1l10-5l10 1l-2 5l-6 4l2 4l-8 4l-8-1l-14-3l-14-6l-14-8z" fill="#8c5c40"/><path d="M536 348l8-5l12 1l-2 5l-6 4l2 4l-8 4l-8-2z" fill="#d8a48c"/><path d="M504 240L507 246L506 252L508.500 257.500L505.500 259.500L505.500 263L502.500 267L501 270.500L496 272L490 270L488 284L476 276L479 256L483 247L488 243C492 239 498 238 504 240Z" fill="#5e3c2a"/><path d="M496 243L505 242.500L506.500 252L504 262L497 266L491 258L492 248Z" fill="#8a5e46" opacity=".85"/><path d="M483 247l4.500-1l1.500 5l-1.500 5.500l-4-1.500z" fill="#7c5038"/><path d="M498.500 247.500l7-1.200l0.500 2.200l-6.500 1.500z" fill="#2e1c12"/><path d="M500 264.500l4.500-1l-0.500 1.800l-3.500 0.800z" fill="#3a2016"/><path d="M480 262l9 4l4 8l-3 8l-12 2z" fill="#3a2216"/><path d="M473 245C472 232 480 222 490 221.500C500 221 507 228 509 237L504 240.500C498 238 492 240 488 244L483 247.500L479 256L471 264L462 269L459 263L468 254Z" fill="#15110e"/><path d="M477 240C480 231 487 226 496 226M480 245C484 236 491 231 501 231M476 250C478 244 481 240 485 238" stroke="#3c342e" stroke-width="0.900" fill="none" opacity=".8"/><path d="M503 236l4 1.500l-1.500 2.500l-3-0.500z" fill="#a89888" opacity=".8"/><path d="M470 266l10-6l6 12l6 6l6 6l3 10l-2 20l-3 19l-8 3l0 14l5 38l-30 2l-29-3l3-24l4-26l2-22l8-24l10-16z" fill="#0b0b0c"/><path d="M486 271L490.500 273L493 291L489 285Z" fill="#6a4430"/><path d="M441 386l52 2l7 22l10 18l-1 10l-7 16l-6 16l-8 19l-50 0l4-10l16-20l8-14l-6-18l-9-18z" fill="#141617"/><path d="M470 400l12 22l4 20l-10 28" stroke="#2c3032" stroke-width="2" fill="none" opacity=".8"/><path d="M492 398l8 26l-6 26" stroke="#2a2e30" stroke-width="1.500" fill="none" opacity=".8"/></g><g><path d="M461 265L466 266L470.5 273L468 280L458 290L448 295L438 296.5L435 298L435.6 308L436 324L438 340L439 348L439 352L433 362L424 367L419 361L422 350L427 340L425 334L420 316L417 300L416.4 292L420 288L432 281L448 271Z" fill="#25d51f" stroke="#9a78d8" stroke-width="0.700" stroke-linejoin="round"/><circle cx="426" cy="297" r="7.500" fill="#20e01c" stroke="#9a78d8" stroke-width="0.500" opacity=".8"/><circle cx="432.500" cy="342" r="5" fill="#20e01c" stroke="#9a78d8" stroke-width="0.500" opacity=".8"/></g><g fill="#c4c0b8" opacity=".8" font-family="Liberation Serif,serif"><text x="328" y="466" font-size="10.500" textLength="58" lengthAdjust="spacingAndGlyphs">Steve Wright’s</text><text x="335" y="481" font-size="8.500" font-style="italic" letter-spacing="-0.400">vfx</text><text x="344.500" y="481" font-size="16" letter-spacing="-0.800">IO</text><text x="360" y="481" font-family="Liberation Sans,sans-serif" font-size="8.500" font-style="italic" letter-spacing="-0.500">.com</text></g></g></svg>
<div class="a" style="left:0px;top:182px;width:140px;height:350px;background:#424242;"></div>
<span class="t" style="left:38.75px;top:186.4px;font-size:7px;color:#e6e6e6;font-weight:bold;letter-spacing:-0.46px;">Layer Controls</span>
<div class="a" style="left:121.5px;top:186.5px;width:7px;height:6.5px;background:#262626;border-radius:1px"></div>
<svg style="left:122.5px;top:187.0px" width="6" height="6" viewBox="0 0 6 6"><rect x="1.800" y="0.500" width="3.400" height="3.400" fill="#2a2a2a" stroke="#c8c8c8" stroke-width="0.700"/><rect x="0.500" y="2" width="3.200" height="3.200" fill="#2a2a2a" stroke="#c8c8c8" stroke-width="0.700"/></svg>
<div class="a" style="left:130.5px;top:186.5px;width:7px;height:6.5px;background:#262626;border-radius:1px"></div>
<svg style="left:132.3px;top:187.8px" width="3.5" height="4" viewBox="0 0 3.5 4"><path d="M0 0l3.500 4M3.500 0l-3.500 4" stroke="#dcdcdc" stroke-width="0.900"/></svg>
<div class="a" style="left:2px;top:197px;width:135.5px;height:98.5px;background:#47474b;box-shadow:0 0 0 0.500px #2c2c2c"></div>
<div class="a" style="left:2px;top:197px;width:126px;height:13px;background:#3b3b3b;"></div>
<div class="a" style="left:2px;top:210px;width:78px;height:85.5px;background:#4b4b50;"></div>
<svg style="left:5px;top:201.5px" width="7" height="5" viewBox="0 0 7 5"><ellipse cx="3.500" cy="2.500" rx="3.300" ry="2.200" fill="#9a9a9a"/><ellipse cx="3.500" cy="2.500" rx="1.500" ry="1.300" fill="#5a5a5a"/></svg>
<svg style="left:21px;top:200px" width="8" height="8" viewBox="0 0 8 8"><circle cx="4" cy="4" r="2.300" fill="none" stroke="#f0f0f0" stroke-width="1.500"/><path d="M4 0v8M0 4h8M1.200 1.200l5.600 5.600M6.800 1.200l-5.600 5.600" stroke="#f0f0f0" stroke-width="1.100"/><circle cx="4" cy="4" r="1" fill="#444"/></svg>
<svg style="left:38.5px;top:199.5px" width="6" height="8" viewBox="0 0 6 8"><path d="M1.500 4v-1.500c0-2.500 3-2.500 3 0v1.500" fill="none" stroke="#f0f0f0" stroke-width="1"/><rect x="0.300" y="3.500" width="5.400" height="4.200" rx="0.800" fill="#f4f4f4"/></svg>
<span class="t" style="left:53px;top:200.4px;font-size:7px;color:#e6e6e6;font-weight:bold;letter-spacing:-0.14px;">Layer name</span>
<svg style="left:5px;top:214.5px" width="7" height="5" viewBox="0 0 7 5"><ellipse cx="3.500" cy="2.500" rx="3.300" ry="2.200" fill="#9a9a9a"/><ellipse cx="3.500" cy="2.500" rx="1.500" ry="1.300" fill="#5a5a5a"/></svg>
<svg style="left:21px;top:213px" width="8" height="8" viewBox="0 0 8 8"><circle cx="4" cy="4" r="2.300" fill="none" stroke="#f0f0f0" stroke-width="1.500"/><path d="M4 0v8M0 4h8M1.200 1.200l5.600 5.600M6.800 1.200l-5.600 5.600" stroke="#f0f0f0" stroke-width="1.100"/><circle cx="4" cy="4" r="1" fill="#444"/></svg>
<div class="a" style="left:37px;top:213px;width:8px;height:8px;background:#46464a;box-shadow:inset 0 0 0 0.600px #3a3a3e"></div>
<span class="t" style="left:52.5px;top:213.4px;font-size:7px;color:#e6e6e6;font-weight:bold;letter-spacing:-0.01px;">upr arm</span>
<div class="a" style="left:121.5px;top:213px;width:6px;height:8px;background:#b060f4;"></div>
<svg style="left:5px;top:232.0px" width="7" height="5" viewBox="0 0 7 5"><ellipse cx="3.500" cy="2.500" rx="3.300" ry="2.200" fill="#9a9a9a"/><ellipse cx="3.500" cy="2.500" rx="1.500" ry="1.300" fill="#5a5a5a"/></svg>
<svg style="left:21px;top:230.5px" width="8" height="8" viewBox="0 0 8 8"><circle cx="4" cy="4" r="2.300" fill="none" stroke="#f0f0f0" stroke-width="1.500"/><path d="M4 0v8M0 4h8M1.200 1.200l5.600 5.600M6.800 1.200l-5.600 5.600" stroke="#f0f0f0" stroke-width="1.100"/><circle cx="4" cy="4" r="1" fill="#444"/></svg>
<div class="a" style="left:37px;top:230.5px;width:8px;height:8px;background:#46464a;box-shadow:inset 0 0 0 0.600px #3a3a3e"></div>
<span class="t" style="left:52.5px;top:230.9px;font-size:7px;color:#e6e6e6;font-weight:bold;letter-spacing:0.03px;">elbow</span>
<div class="a" style="left:121.5px;top:230.5px;width:6px;height:8px;background:#b060f4;"></div>
<svg style="left:5px;top:249.5px" width="7" height="5" viewBox="0 0 7 5"><ellipse cx="3.500" cy="2.500" rx="3.300" ry="2.200" fill="#9a9a9a"/><ellipse cx="3.500" cy="2.500" rx="1.500" ry="1.300" fill="#5a5a5a"/></svg>
<svg style="left:21px;top:248px" width="8" height="8" viewBox="0 0 8 8"><circle cx="4" cy="4" r="2.300" fill="none" stroke="#f0f0f0" stroke-width="1.500"/><path d="M4 0v8M0 4h8M1.200 1.200l5.600 5.600M6.800 1.200l-5.600 5.600" stroke="#f0f0f0" stroke-width="1.100"/><circle cx="4" cy="4" r="1" fill="#444"/></svg>
<div class="a" style="left:37px;top:248px;width:8px;height:8px;background:#46464a;box-shadow:inset 0 0 0 0.600px #3a3a3e"></div>
<span class="t" style="left:52.5px;top:248.4px;font-size:7px;color:#e6e6e6;font-weight:bold;letter-spacing:0.01px;">lwr arm</span>
<div class="a" style="left:121.5px;top:248px;width:6px;height:8px;background:#b060f4;"></div>
<svg style="left:5px;top:267.0px" width="7" height="5" viewBox="0 0 7 5"><ellipse cx="3.500" cy="2.500" rx="3.300" ry="2.200" fill="#9a9a9a"/><ellipse cx="3.500" cy="2.500" rx="1.500" ry="1.300" fill="#5a5a5a"/></svg>
<svg style="left:21px;top:265.5px" width="8" height="8" viewBox="0 0 8 8"><circle cx="4" cy="4" r="2.300" fill="none" stroke="#f0f0f0" stroke-width="1.500"/><path d="M4 0v8M0 4h8M1.200 1.200l5.600 5.600M6.800 1.200l-5.600 5.600" stroke="#f0f0f0" stroke-width="1.100"/><circle cx="4" cy="4" r="1" fill="#444"/></svg>
<div class="a" style="left:37px;top:265.5px;width:8px;height:8px;background:#46464a;box-shadow:inset 0 0 0 0.600px #3a3a3e"></div>
<span class="t" style="left:52.5px;top:265.9px;font-size:7px;color:#e6e6e6;font-weight:bold;letter-spacing:-0.17px;">wrist</span>
<div class="a" style="left:121.5px;top:265.5px;width:6px;height:8px;background:#b060f4;"></div>
<svg style="left:5px;top:284.5px" width="7" height="5" viewBox="0 0 7 5"><ellipse cx="3.500" cy="2.500" rx="3.300" ry="2.200" fill="#9a9a9a"/><ellipse cx="3.500" cy="2.500" rx="1.500" ry="1.300" fill="#5a5a5a"/></svg>
<svg style="left:21px;top:283px" width="8" height="8" viewBox="0 0 8 8"><circle cx="4" cy="4" r="2.300" fill="none" stroke="#f0f0f0" stroke-width="1.500"/><path d="M4 0v8M0 4h8M1.200 1.200l5.600 5.600M6.800 1.200l-5.600 5.600" stroke="#f0f0f0" stroke-width="1.100"/><circle cx="4" cy="4" r="1" fill="#444"/></svg>
<div class="a" style="left:37px;top:283px;width:8px;height:8px;background:#46464a;box-shadow:inset 0 0 0 0.600px #3a3a3e"></div>
<span class="t" style="left:52.5px;top:283.4px;font-size:7px;color:#e6e6e6;font-weight:bold;letter-spacing:-0.06px;">hand</span>
<div class="a" style="left:121.5px;top:283px;width:6px;height:8px;background:#b060f4;"></div>
<div class="a" style="left:128px;top:197px;width:8.5px;height:98px;background:#414141;"></div>
<div class="a" style="left:128.5px;top:198px;width:7.5px;height:8px;background:#d0d0d0;border-radius:1px;background:linear-gradient(#e8e8e8,#b0b0b0)"></div>
<svg style="left:129.8px;top:200.5px" width="5" height="3" viewBox="0 0 5 3"><path d="M0 3l2.500-3l2.500 3z" fill="#2a2a2a"/></svg>
<div class="a" style="left:128.5px;top:231px;width:7.5px;height:44px;background:#707070;border-radius:1px;box-shadow:inset 0 0 0 0.500px #8a8a8a"></div>
<svg style="left:130px;top:249px" width="5" height="8" viewBox="0 0 5 8"><path d="M0 1h5M0 3h5M0 5h5M0 7h5" stroke="#555" stroke-width="0.700" stroke-dasharray="1 1"/></svg>
<div class="a" style="left:128.5px;top:277px;width:7.5px;height:8px;background:#d0d0d0;border-radius:1px;background:linear-gradient(#e8e8e8,#b0b0b0)"></div>
<svg style="left:129.8px;top:279.5px" width="5" height="3" viewBox="0 0 5 3"><path d="M0 3l2.500-3l2.500 3z" fill="#2a2a2a"/></svg>
<div class="a" style="left:128.5px;top:286px;width:7.5px;height:8px;background:#d0d0d0;border-radius:1px;background:linear-gradient(#e8e8e8,#b0b0b0)"></div>
<svg style="left:129.8px;top:288.5px" width="5" height="3" viewBox="0 0 5 3"><path d="M0 0l2.500 3l2.500-3z" fill="#2a2a2a"/></svg>
<div class="a" style="left:2px;top:299px;width:24px;height:8.5px;background:#5b5b5b;border-radius:1.500px;box-shadow:inset 0 0.500px 0 rgba(255,255,255,.12),0 0 0 0.500px #2a2a2a;"></div>
<div class="a" style="left:29px;top:299px;width:25px;height:8.5px;background:#5b5b5b;border-radius:1.500px;box-shadow:inset 0 0.500px 0 rgba(255,255,255,.12),0 0 0 0.500px #2a2a2a;"></div>
<div class="a" style="left:57px;top:299px;width:24px;height:8.5px;background:#5b5b5b;border-radius:1.500px;box-shadow:inset 0 0.500px 0 rgba(255,255,255,.12),0 0 0 0.500px #2a2a2a;"></div>
<div class="a" style="left:84px;top:299px;width:25px;height:8.5px;background:#5b5b5b;border-radius:1.500px;box-shadow:inset 0 0.500px 0 rgba(255,255,255,.12),0 0 0 0.500px #2a2a2a;"></div>
<div class="a" style="left:112px;top:299px;width:25px;height:8.5px;background:#5b5b5b;border-radius:1.500px;box-shadow:inset 0 0.500px 0 rgba(255,255,255,.12),0 0 0 0.500px #2a2a2a;"></div>
<svg style="left:92px;top:300px" width="9" height="7" viewBox="0 0 9 7"><path d="M1.200 3v-1c0-2 2.600-2 2.600 0v1" fill="none" stroke="#f0f0f0" stroke-width="0.900"/><rect x="0.300" y="2.800" width="4.400" height="3.700" rx="0.600" fill="#f4f4f4"/><path d="M6 4.500h2.500" stroke="#e0e0e0" stroke-width="0.900"/></svg>
<svg style="left:120px;top:300px" width="9" height="7" viewBox="0 0 9 7"><path d="M1.200 3v-1c0-2 2.600-2 2.600 0v1" fill="none" stroke="#f0f0f0" stroke-width="0.900"/><rect x="0.300" y="2.800" width="4.400" height="3.700" rx="0.600" fill="#f4f4f4"/><path d="M6 4.500h2.500" stroke="#e0e0e0" stroke-width="0.900"/></svg>
<div class="a" style="left:12px;top:301px;width:5px;height:4.5px;background:#686868;"></div>
<div class="a" style="left:40px;top:301px;width:5px;height:4.5px;background:#686868;"></div>
<div class="a" style="left:68px;top:301px;width:5px;height:4.5px;background:#686868;"></div>
<div class="a" style="left:2px;top:310px;width:135px;height:9px;background:#616161;border-radius:1.500px;box-shadow:inset 0 0.500px 0 rgba(255,255,255,.12),0 0 0 0.500px #2a2a2a;"></div>
<span class="t" style="left:47px;top:311.2px;font-size:7px;color:#787878;font-weight:bold;letter-spacing:-0.01px;">Align Surface</span>
<span class="t" style="left:36px;top:323.4px;font-size:7px;color:#e6e6e6;font-weight:bold;letter-spacing:-0.42px;">Layer Properties</span>
<div class="a" style="left:121.5px;top:323.5px;width:7px;height:6.5px;background:#262626;border-radius:1px"></div>
<svg style="left:122.5px;top:324.0px" width="6" height="6" viewBox="0 0 6 6"><rect x="1.800" y="0.500" width="3.400" height="3.400" fill="#2a2a2a" stroke="#c8c8c8" stroke-width="0.700"/><rect x="0.500" y="2" width="3.200" height="3.200" fill="#2a2a2a" stroke="#c8c8c8" stroke-width="0.700"/></svg>
<div class="a" style="left:130.5px;top:323.5px;width:7px;height:6.5px;background:#262626;border-radius:1px"></div>
<svg style="left:132.3px;top:324.8px" width="3.5" height="4" viewBox="0 0 3.5 4"><path d="M0 0l3.500 4M3.500 0l-3.500 4" stroke="#dcdcdc" stroke-width="0.900"/></svg>
<span class="t" style="left:8px;top:339.7px;font-size:7px;color:#4f4f4f;font-weight:bold;letter-spacing:-0.86px;">In</span>
<div class="a" style="left:15px;top:339px;width:48.5px;height:9px;background:#3a3a3a;border-radius:1.500px;box-shadow:inset 0 0 0 0.700px #2b2b2b,0 0.600px 0 #4c4c4c"></div>
<span class="t" style="left:18px;top:340.2px;font-size:7px;color:#565656;font-weight:bold;">1</span>
<span class="t" style="left:73px;top:339.7px;font-size:7px;color:#4f4f4f;font-weight:bold;letter-spacing:-1.52px;">Out</span>
<div class="a" style="left:83px;top:339px;width:49.5px;height:9px;background:#3a3a3a;border-radius:1.500px;box-shadow:inset 0 0 0 0.700px #2b2b2b,0 0.600px 0 #4c4c4c"></div>
<span class="t" style="left:86px;top:340.2px;font-size:7px;color:#565656;font-weight:bold;">26</span>
<div class="a" style="left:16px;top:349.5px;width:12.5px;height:10px;background:#6a6a6a;border-radius:1.500px;box-shadow:inset 0 0.500px 0 rgba(255,255,255,.12),0 0 0 0.500px #2a2a2a;"></div>
<svg style="left:16px;top:349.5px" width="12.5" height="10" viewBox="0 0 12.5 10"><path d="M2.75 5.0h2.500" stroke="#f4f4f4" fill="none" stroke-width="1.300"/><path d="M9.25 1.7000000000000002h-2.500v6.600h2.500" stroke="#f4f4f4" fill="none" stroke-width="1.300"/></svg>
<div class="a" style="left:40px;top:349.5px;width:12.5px;height:10px;background:#6a6a6a;border-radius:1.500px;box-shadow:inset 0 0.500px 0 rgba(255,255,255,.12),0 0 0 0.500px #2a2a2a;"></div>
<svg style="left:40px;top:349.5px" width="12.5" height="10" viewBox="0 0 12.5 10"><circle cx="6.25" cy="5.0" r="3.200" stroke="#f4f4f4" fill="none" stroke-width="1"/><path d="M6.25 2.0v6" stroke="#f4f4f4" fill="none" stroke-width="1.200"/></svg>
<div class="a" style="left:82px;top:349.5px;width:12.5px;height:10px;background:#6a6a6a;border-radius:1.500px;box-shadow:inset 0 0.500px 0 rgba(255,255,255,.12),0 0 0 0.500px #2a2a2a;"></div>
<svg style="left:82px;top:349.5px" width="12.5" height="10" viewBox="0 0 12.5 10"><circle cx="6.25" cy="5.0" r="3.200" stroke="#f4f4f4" fill="none" stroke-width="1"/><path d="M6.25 2.0v6" stroke="#f4f4f4" fill="none" stroke-width="1.200"/></svg>
<div class="a" style="left:108px;top:349.5px;width:12.5px;height:10px;background:#6a6a6a;border-radius:1.500px;box-shadow:inset 0 0.500px 0 rgba(255,255,255,.12),0 0 0 0.500px #2a2a2a;"></div>
<svg style="left:108px;top:349.5px" width="12.5" height="10" viewBox="0 0 12.5 10"><path d="M9.75 5.0h-2.500" stroke="#f4f4f4" fill="none" stroke-width="1.300"/><path d="M3.25 1.7000000000000002h2.500v6.600h-2.500" stroke="#f4f4f4" fill="none" stroke-width="1.300"/></svg>
<span class="t" style="left:5px;top:366.9px;font-size:7px;color:#555555;font-weight:bold;letter-spacing:0.03px;">Blend Mode</span>
<div class="a" style="left:52px;top:366px;width:42px;height:9.5px;background:#5e5e5e;border-radius:1.500px;background:linear-gradient(#686868,#5a5a5a);box-shadow:inset 0 0.500px 0 #747474,0 0 0 0.700px #303030"></div>
<div class="a" style="left:85px;top:367px;width:0.7px;height:7.5px;background:#777;"></div>
<svg style="left:87.5px;top:369.75px" width="4" height="2.5" viewBox="0 0 4 2.5"><path d="M0 0h4l-2 2.500z" fill="#777"/></svg>
<span class="t" style="left:56px;top:367.4px;font-size:7px;color:#727272;font-weight:bold;letter-spacing:-0.87px;">Add</span>
<div class="a" style="left:100px;top:367px;width:7px;height:7px;background:#484848;box-shadow:inset 0 0 0 0.700px #2e2e2e"></div>
<span class="t" style="left:111px;top:366.9px;font-size:7px;color:#555555;font-weight:bold;letter-spacing:-0.01px;">Invert</span>
<span class="t" style="left:5px;top:381.9px;font-size:7px;color:#555555;font-weight:bold;letter-spacing:-0.11px;">Insert Clip</span>
<div class="a" style="left:52px;top:381px;width:80.5px;height:9px;background:#5e5e5e;border-radius:1.500px;background:linear-gradient(#686868,#5a5a5a);box-shadow:inset 0 0.500px 0 #747474,0 0 0 0.700px #303030"></div>
<div class="a" style="left:123.5px;top:382px;width:0.7px;height:7px;background:#777;"></div>
<svg style="left:126.0px;top:384.5px" width="4" height="2.5" viewBox="0 0 4 2.5"><path d="M0 0h4l-2 2.500z" fill="#777"/></svg>
<span class="t" style="left:66px;top:382.2px;font-size:7px;color:#727272;font-weight:bold;letter-spacing:-0.13px;">None</span>
<div class="a" style="left:58px;top:384px;width:3px;height:3px;background:#333;"></div>
<span class="t" style="left:5px;top:396.9px;font-size:7px;color:#555555;font-weight:bold;letter-spacing:0.05px;">Matte Clip</span>
<div class="a" style="left:52px;top:395.5px;width:80.5px;height:9px;background:#5e5e5e;border-radius:1.500px;background:linear-gradient(#686868,#5a5a5a);box-shadow:inset 0 0.500px 0 #747474,0 0 0 0.700px #303030"></div>
<div class="a" style="left:123.5px;top:396.5px;width:0.7px;height:7px;background:#777;"></div>
<svg style="left:126.0px;top:399.0px" width="4" height="2.5" viewBox="0 0 4 2.5"><path d="M0 0h4l-2 2.500z" fill="#777"/></svg>
<span class="t" style="left:66px;top:396.7px;font-size:7px;color:#727272;font-weight:bold;letter-spacing:-0.13px;">None</span>
<div class="a" style="left:58px;top:398.5px;width:3px;height:3px;background:#333;"></div>
<span class="t" style="left:5px;top:411.4px;font-size:7px;color:#555555;font-weight:bold;letter-spacing:-0.05px;">Link to track</span>
<div class="a" style="left:52px;top:410px;width:80.5px;height:9px;background:#5e5e5e;border-radius:1.500px;background:linear-gradient(#686868,#5a5a5a);box-shadow:inset 0 0.500px 0 #747474,0 0 0 0.700px #303030"></div>
<div class="a" style="left:123.5px;top:411px;width:0.7px;height:7px;background:#777;"></div>
<svg style="left:126.0px;top:413.5px" width="4" height="2.5" viewBox="0 0 4 2.5"><path d="M0 0h4l-2 2.500z" fill="#777"/></svg>
<span class="t" style="left:56px;top:411.2px;font-size:7px;color:#727272;font-weight:bold;letter-spacing:-0.47px;">wrist</span>
<div class="a" style="left:6px;top:426px;width:7px;height:7px;background:#484848;box-shadow:inset 0 0 0 0.700px #2e2e2e"></div>
<span class="t" style="left:16px;top:426.2px;font-size:7px;color:#555555;font-weight:bold;letter-spacing:-0.11px;">Link to adjusted track</span>
<span class="t" style="left:37px;top:442.4px;font-size:7px;color:#e6e6e6;font-weight:bold;letter-spacing:-0.45px;">Edge Properties</span>
<div class="a" style="left:121.5px;top:442.5px;width:7px;height:6.5px;background:#262626;border-radius:1px"></div>
<svg style="left:122.5px;top:443.0px" width="6" height="6" viewBox="0 0 6 6"><rect x="1.800" y="0.500" width="3.400" height="3.400" fill="#2a2a2a" stroke="#c8c8c8" stroke-width="0.700"/><rect x="0.500" y="2" width="3.200" height="3.200" fill="#2a2a2a" stroke="#c8c8c8" stroke-width="0.700"/></svg>
<div class="a" style="left:130.5px;top:442.5px;width:7px;height:6.5px;background:#262626;border-radius:1px"></div>
<svg style="left:132.3px;top:443.8px" width="3.5" height="4" viewBox="0 0 3.5 4"><path d="M0 0l3.500 4M3.500 0l-3.500 4" stroke="#dcdcdc" stroke-width="0.900"/></svg>
<span class="t" style="left:16px;top:460.2px;font-size:7px;color:#555555;font-weight:bold;letter-spacing:-0.04px;">Edge Width</span>
<div class="a" style="left:59px;top:458px;width:29.5px;height:11px;background:#3a3a3a;border-radius:1.500px;box-shadow:inset 0 0 0 0.700px #2b2b2b,0 0.600px 0 #4c4c4c"></div>
<span class="t" style="left:62px;top:460.2px;font-size:7px;color:#555555;font-weight:bold;">3</span>
<span class="t" style="left:93px;top:460.2px;font-size:7px;color:#555555;font-weight:bold;letter-spacing:-0.30px;">Set</span>
<span class="t" style="left:114px;top:460.2px;font-size:7px;color:#555555;font-weight:bold;letter-spacing:0.13px;">Add</span>
<span class="t" style="left:11px;top:476.4px;font-size:7px;color:#505050;font-weight:bold;letter-spacing:0.01px;">Motion Blur</span>
<span class="t" style="left:63px;top:475.4px;font-size:7px;color:#555555;font-weight:bold;letter-spacing:-0.09px;">Angle</span>
<div class="a" style="left:86px;top:473.5px;width:47px;height:11px;background:#3a3a3a;border-radius:1.500px;box-shadow:inset 0 0 0 0.700px #2b2b2b,0 0.600px 0 #4c4c4c"></div>
<span class="t" style="left:89px;top:475.7px;font-size:7px;color:#555555;font-weight:bold;">180</span>
<span class="t" style="left:64px;top:491.4px;font-size:7px;color:#555555;font-weight:bold;letter-spacing:-0.53px;">Phase</span>
<div class="a" style="left:86px;top:489px;width:47px;height:11px;background:#3a3a3a;border-radius:1.500px;box-shadow:inset 0 0 0 0.700px #2b2b2b,0 0.600px 0 #4c4c4c"></div>
<span class="t" style="left:89px;top:491.2px;font-size:7px;color:#555555;font-weight:bold;">0</span>
<span class="t" style="left:59px;top:506.9px;font-size:7px;color:#555555;font-weight:bold;letter-spacing:-0.10px;">Quality</span>
<div class="a" style="left:86px;top:504.5px;width:47px;height:11px;background:#3a3a3a;border-radius:1.500px;box-shadow:inset 0 0 0 0.700px #2b2b2b,0 0.600px 0 #4c4c4c"></div>
<span class="t" style="left:89px;top:506.7px;font-size:7px;color:#555555;font-weight:bold;">0.25</span>
<div class="a" style="left:140px;top:490.5px;width:658px;height:42px;background:#353535;"></div>
<div class="a" style="left:141.5px;top:491.6px;width:655.5px;height:3.4px;background:#86b2f2;border-radius:1px"></div>
<svg style="left:0;top:0" width="800" height="800" viewBox="0 0 800 800"><rect x="143.25" y="502.300" width="1" height="4.200" fill="#d8e048"/><rect x="151.94" y="502.300" width="1" height="4.200" fill="#d8e048"/><rect x="160.64" y="502.300" width="1" height="4.200" fill="#d8e048"/><rect x="169.33" y="502.300" width="1" height="4.200" fill="#d8e048"/><rect x="178.02" y="502.300" width="1" height="4.200" fill="#d8e048"/><rect x="186.72" y="502.300" width="1" height="4.200" fill="#d8e048"/><rect x="195.41" y="502.300" width="1" height="4.200" fill="#d8e048"/><rect x="204.10" y="502.300" width="1" height="4.200" fill="#d8e048"/><rect x="212.79" y="502.300" width="1" height="4.200" fill="#d8e048"/><rect x="221.49" y="502.300" width="1" height="4.200" fill="#d8e048"/><rect x="230.18" y="502.300" width="1" height="4.200" fill="#d8e048"/><rect x="238.87" y="502.300" width="1" height="4.200" fill="#d8e048"/><rect x="247.57" y="502.300" width="1" height="4.200" fill="#d8e048"/><rect x="256.26" y="502.300" width="1" height="4.200" fill="#d8e048"/><rect x="264.95" y="502.300" width="1" height="4.200" fill="#d8e048"/><rect x="273.64" y="502.300" width="1" height="4.200" fill="#d8e048"/><rect x="282.34" y="502.300" width="1" height="4.200" fill="#d8e048"/><rect x="291.03" y="502.300" width="1" height="4.200" fill="#d8e048"/><rect x="299.72" y="502.300" width="1" height="4.200" fill="#d8e048"/><rect x="308.42" y="502.300" width="1" height="4.200" fill="#d8e048"/><rect x="317.11" y="502.300" width="1" height="4.200" fill="#d8e048"/><rect x="325.80" y="502.300" width="1" height="4.200" fill="#d8e048"/><rect x="334.50" y="502.300" width="1" height="4.200" fill="#d8e048"/><rect x="343.19" y="502.300" width="1" height="4.200" fill="#d8e048"/><rect x="351.88" y="502.300" width="1" height="4.200" fill="#d8e048"/><rect x="360.57" y="502.300" width="1" height="4.200" fill="#d8e048"/><rect x="369.27" y="502.300" width="1" height="4.200" fill="#d8e048"/><rect x="377.96" y="502.300" width="1" height="4.200" fill="#d8e048"/><rect x="386.65" y="502.300" width="1" height="4.200" fill="#d8e048"/><rect x="395.35" y="502.300" width="1" height="4.200" fill="#d8e048"/><rect x="404.04" y="502.300" width="1" height="4.200" fill="#d8e048"/><rect x="412.73" y="502.300" width="1" height="4.200" fill="#d8e048"/><rect x="421.43" y="502.300" width="1" height="4.200" fill="#d8e048"/><rect x="430.12" y="502.300" width="1" height="4.200" fill="#d8e048"/><rect x="438.81" y="502.300" width="1" height="4.200" fill="#d8e048"/><rect x="447.50" y="502.300" width="1" height="4.200" fill="#d8e048"/><rect x="456.20" y="502.300" width="1" height="4.200" fill="#d8e048"/><rect x="464.89" y="502.300" width="1" height="4.200" fill="#d8e048"/><rect x="473.58" y="502.300" width="1" height="4.200" fill="#d8e048"/><rect x="482.28" y="502.300" width="1" height="4.200" fill="#d8e048"/><rect x="490.97" y="502.300" width="1" height="4.200" fill="#d8e048"/><rect x="499.66" y="502.300" width="1" height="4.200" fill="#d8e048"/><rect x="508.36" y="502.300" width="1" height="4.200" fill="#d8e048"/><rect x="517.05" y="502.300" width="1" height="4.200" fill="#d8e048"/><rect x="525.74" y="502.300" width="1" height="4.200" fill="#d8e048"/><rect x="534.43" y="502.300" width="1" height="4.200" fill="#d8e048"/><rect x="543.13" y="502.300" width="1" height="4.200" fill="#d8e048"/><rect x="551.82" y="502.300" width="1" height="4.200" fill="#d8e048"/><rect x="560.51" y="502.300" width="1" height="4.200" fill="#d8e048"/><rect x="569.21" y="502.300" width="1" height="4.200" fill="#d8e048"/><rect x="577.90" y="502.300" width="1" height="4.200" fill="#d8e048"/><rect x="586.59" y="502.300" width="1" height="4.200" fill="#d8e048"/><rect x="595.29" y="502.300" width="1" height="4.200" fill="#d8e048"/><rect x="603.98" y="502.300" width="1" height="4.200" fill="#d8e048"/><rect x="612.67" y="502.300" width="1" height="4.200" fill="#d8e048"/><rect x="621.37" y="502.300" width="1" height="4.200" fill="#d8e048"/><rect x="630.06" y="502.300" width="1" height="4.200" fill="#d8e048"/><rect x="638.75" y="502.300" width="1" height="4.200" fill="#d8e048"/><rect x="647.44" y="502.300" width="1" height="4.200" fill="#d8e048"/><rect x="656.14" y="502.300" width="1" height="4.200" fill="#d8e048"/><rect x="664.83" y="502.300" width="1" height="4.200" fill="#d8e048"/><rect x="673.52" y="502.300" width="1" height="4.200" fill="#d8e048"/><rect x="682.22" y="502.300" width="1" height="4.200" fill="#d8e048"/><rect x="690.91" y="502.300" width="1" height="4.200" fill="#d8e048"/><rect x="699.60" y="502.300" width="1" height="4.200" fill="#d8e048"/><rect x="708.29" y="502.300" width="1" height="4.200" fill="#d8e048"/><rect x="716.99" y="502.300" width="1" height="4.200" fill="#d8e048"/><rect x="725.68" y="502.300" width="1" height="4.200" fill="#d8e048"/><rect x="734.37" y="502.300" width="1" height="4.200" fill="#d8e048"/><rect x="743.07" y="502.300" width="1" height="4.200" fill="#d8e048"/><rect x="751.76" y="502.300" width="1" height="4.200" fill="#d8e048"/><rect x="760.45" y="502.300" width="1" height="4.200" fill="#d8e048"/><rect x="769.15" y="502.300" width="1" height="4.200" fill="#d8e048"/><rect x="777.84" y="502.300" width="1" height="4.200" fill="#d8e048"/><rect x="786.53" y="502.300" width="1" height="4.200" fill="#d8e048"/><rect x="795.23" y="502.300" width="1" height="4.200" fill="#d8e048"/><rect x="143" y="506.300" width="654" height="1" fill="#969696"/><path d="M419.300 491h5l-2 4.500v11.500h-1v-11.500z" fill="#f4f4f4"/><path d="M506.300 491h3.200l-0.800 5.500v10.500h-1.600v-10.500z" fill="#e01020"/></svg>
<div class="a" style="left:146.5px;top:509px;width:51.5px;height:10.5px;background:#3b3b3b;border-radius:1.500px;box-shadow:inset 0 0 0 0.700px #555,0 0 0 0.500px #222"></div>
<span class="t" style="left:168.25px;top:510.7px;font-size:7px;color:#e6e6e6;font-weight:bold;letter-spacing:0.36px;">33</span>
<div class="a" style="left:229.5px;top:509px;width:51px;height:10.5px;background:#3b3b3b;border-radius:1.500px;box-shadow:inset 0 0 0 0.700px #555,0 0 0 0.500px #222"></div>
<span class="t" style="left:251.0px;top:510.7px;font-size:7px;color:#e6e6e6;font-weight:bold;letter-spacing:0.36px;">33</span>
<div class="a" style="left:312px;top:509px;width:52px;height:10.5px;background:#3b3b3b;border-radius:1.500px;box-shadow:inset 0 0 0 0.700px #555,0 0 0 0.500px #222"></div>
<span class="t" style="left:334.0px;top:510.7px;font-size:7px;color:#e6e6e6;font-weight:bold;letter-spacing:0.36px;">43</span>
<div class="a" style="left:201.7px;top:509px;width:10px;height:10px;background:#6c6c6c;border-radius:1.500px;box-shadow:inset 0 0.500px 0 rgba(255,255,255,.12),0 0 0 0.500px #2a2a2a;"></div>
<svg style="left:201.7px;top:509px" width="10" height="10" viewBox="0 0 10 10"><path d="M1.5 5.0h2.500" stroke="#f4f4f4" fill="none" stroke-width="1.300"/><path d="M8.0 1.7000000000000002h-2.500v6.600h2.500" stroke="#f4f4f4" fill="none" stroke-width="1.300"/></svg>
<div class="a" style="left:215.4px;top:509px;width:10.6px;height:10px;background:#6c6c6c;border-radius:1.500px;box-shadow:inset 0 0.500px 0 rgba(255,255,255,.12),0 0 0 0.500px #2a2a2a;"></div>
<svg style="left:215.4px;top:509px" width="10.6" height="10" viewBox="0 0 10.6 10"><circle cx="5.3" cy="5.0" r="3.200" stroke="#f4f4f4" fill="none" stroke-width="1"/><path d="M5.3 2.0v6" stroke="#f4f4f4" fill="none" stroke-width="1.200"/></svg>
<div class="a" style="left:283.6px;top:509px;width:10.8px;height:10px;background:#6c6c6c;border-radius:1.500px;box-shadow:inset 0 0.500px 0 rgba(255,255,255,.12),0 0 0 0.500px #2a2a2a;"></div>
<svg style="left:283.6px;top:509px" width="10.8" height="10" viewBox="0 0 10.8 10"><circle cx="5.4" cy="5.0" r="3.200" stroke="#f4f4f4" fill="none" stroke-width="1"/><path d="M5.4 2.0v6" stroke="#f4f4f4" fill="none" stroke-width="1.200"/></svg>
<div class="a" style="left:298.6px;top:509px;width:10px;height:10px;background:#6c6c6c;border-radius:1.500px;box-shadow:inset 0 0.500px 0 rgba(255,255,255,.12),0 0 0 0.500px #2a2a2a;"></div>
<svg style="left:298.6px;top:509px" width="10" height="10" viewBox="0 0 10 10"><path d="M8.5 5.0h-2.500" stroke="#f4f4f4" fill="none" stroke-width="1.300"/><path d="M2.0 1.7000000000000002h2.500v6.600h-2.500" stroke="#f4f4f4" fill="none" stroke-width="1.300"/></svg>
<div class="a" style="left:366.5px;top:509px;width:9.5px;height:10px;background:#6c6c6c;border-radius:1.500px;box-shadow:inset 0 0.500px 0 rgba(255,255,255,.12),0 0 0 0.500px #2a2a2a;"></div>
<svg style="left:366.5px;top:509px" width="9.5" height="10" viewBox="0 0 9.5 10"><path d="M3.25 1.7000000000000002h-2v6.600h2M6.25 1.7000000000000002h2v6.600h-2" stroke="#f4f4f4" fill="none" stroke-width="1.100"/><path d="M3.25 5.0h3" stroke="#f4f4f4" fill="none" stroke-width="1"/></svg>
<div class="a" style="left:381px;top:509px;width:10px;height:10px;background:#6c6c6c;border-radius:1.500px;box-shadow:inset 0 0.500px 0 rgba(255,255,255,.12),0 0 0 0.500px #2a2a2a;"></div>
<svg style="left:381px;top:509px" width="10" height="10" viewBox="0 0 10 10"><path d="M3.5 1.7000000000000002h-2v6.600h2M6.5 1.7000000000000002h2v6.600h-2" stroke="#f4f4f4" fill="none" stroke-width="1.100"/><path d="M5.0 2.5v5" stroke="#f4f4f4" fill="none" stroke-width="1.200"/></svg>
<div class="a" style="left:410.7px;top:509px;width:10.5px;height:10px;background:#6a6a6a;border-radius:1.500px;box-shadow:inset 0 0.500px 0 rgba(255,255,255,.12),0 0 0 0.500px #2a2a2a;"></div>
<svg style="left:410.7px;top:509px" width="10.5" height="10" viewBox="0 0 10.5 10"><path d="M2.500 2.500v5" stroke="#f2f2f2" stroke-width="1.300"/><path d="M8 2.300v5.400l-4-2.700z" fill="#f2f2f2"/></svg>
<div class="a" style="left:425.5px;top:509px;width:10.5px;height:10px;background:#6a6a6a;border-radius:1.500px;box-shadow:inset 0 0.500px 0 rgba(255,255,255,.12),0 0 0 0.500px #2a2a2a;"></div>
<svg style="left:425.5px;top:509px" width="10.5" height="10" viewBox="0 0 10.5 10"><path d="M8 1.800v6.400l-5.500-3.200z" fill="#f2f2f2"/></svg>
<div class="a" style="left:441.3px;top:509px;width:10.5px;height:10px;background:#6a6a6a;border-radius:1.500px;box-shadow:inset 0 0.500px 0 rgba(255,255,255,.12),0 0 0 0.500px #2a2a2a;"></div>
<svg style="left:441.3px;top:509px" width="10.5" height="10" viewBox="0 0 10.5 10"><path d="M7.800 2.500v5" stroke="#f2f2f2" stroke-width="1.300"/><path d="M6.300 2.300v5.400l-4-2.700z" fill="#f2f2f2"/></svg>
<div class="a" style="left:457px;top:509px;width:10.5px;height:10px;background:#6a6a6a;border-radius:1.500px;box-shadow:inset 0 0.500px 0 rgba(255,255,255,.12),0 0 0 0.500px #2a2a2a;"></div>
<svg style="left:457px;top:509px" width="10.5" height="10" viewBox="0 0 10.5 10"><rect x="2.800" y="2.500" width="5" height="5" fill="#c8c8c8"/></svg>
<div class="a" style="left:472.2px;top:509px;width:10.5px;height:10px;background:#6a6a6a;border-radius:1.500px;box-shadow:inset 0 0.500px 0 rgba(255,255,255,.12),0 0 0 0.500px #2a2a2a;"></div>
<svg style="left:472.2px;top:509px" width="10.5" height="10" viewBox="0 0 10.5 10"><path d="M2.800 2.500v5" stroke="#f2f2f2" stroke-width="1.300"/><path d="M4.300 2.300v5.400l4-2.700z" fill="#f2f2f2"/></svg>
<div class="a" style="left:487.8px;top:509px;width:10.5px;height:10px;background:#6a6a6a;border-radius:1.500px;box-shadow:inset 0 0.500px 0 rgba(255,255,255,.12),0 0 0 0.500px #2a2a2a;"></div>
<svg style="left:487.8px;top:509px" width="10.5" height="10" viewBox="0 0 10.5 10"><path d="M2.700 1.800v6.400l5.500-3.200z" fill="#f2f2f2"/></svg>
<div class="a" style="left:503.3px;top:509px;width:10.5px;height:10px;background:#6a6a6a;border-radius:1.500px;box-shadow:inset 0 0.500px 0 rgba(255,255,255,.12),0 0 0 0.500px #2a2a2a;"></div>
<svg style="left:503.3px;top:509px" width="10.5" height="10" viewBox="0 0 10.5 10"><path d="M8 2.500v5" stroke="#f2f2f2" stroke-width="1.300"/><path d="M2.500 2.300v5.400l4-2.700z" fill="#f2f2f2"/></svg>
<div class="a" style="left:518.7px;top:509px;width:10.5px;height:10px;background:#6a6a6a;border-radius:1.500px;box-shadow:inset 0 0.500px 0 rgba(255,255,255,.12),0 0 0 0.500px #2a2a2a;"></div>
<svg style="left:518.7px;top:509px" width="10.5" height="10" viewBox="0 0 10.5 10"><path d="M2 5h6.500M2 5l1.500-1.500M2 5l1.500 1.500M8.500 5l-1.500-1.500M8.500 5l-1.500 1.500" stroke="#d0d0d0" stroke-width="0.900" fill="none"/></svg>
<div class="a" style="left:541.5px;top:508px;width:1px;height:12px;background:#4a4a4a;"></div>
<span class="t" style="left:550.5px;top:510.7px;font-size:7px;color:#e6e6e6;font-weight:bold;letter-spacing:-0.16px;">Track</span>
<div class="a" style="left:582px;top:509px;width:10.5px;height:10px;background:#6a6a6a;border-radius:1.500px;box-shadow:inset 0 0.500px 0 rgba(255,255,255,.12),0 0 0 0.500px #2a2a2a;"></div>
<svg style="left:582px;top:509px" width="10.5" height="10" viewBox="0 0 10.5 10"><path d="M8 2v6l-5.500-3z" fill="none" stroke="#f2f2f2" stroke-width="1.200"/><circle cx="8" cy="8" r="1" fill="#f2f2f2"/></svg>
<div class="a" style="left:597.6px;top:509px;width:10.5px;height:10px;background:#6a6a6a;border-radius:1.500px;box-shadow:inset 0 0.500px 0 rgba(255,255,255,.12),0 0 0 0.500px #2a2a2a;"></div>
<svg style="left:597.6px;top:509px" width="10.5" height="10" viewBox="0 0 10.5 10"><path d="M7.800 2.500v5" stroke="#f2f2f2" stroke-width="1.200"/><path d="M6 2.500v5l-3.500-2.500z" fill="none" stroke="#f2f2f2" stroke-width="1"/></svg>
<div class="a" style="left:613px;top:509px;width:10.5px;height:10px;background:#6a6a6a;border-radius:1.500px;box-shadow:inset 0 0.500px 0 rgba(255,255,255,.12),0 0 0 0.500px #2a2a2a;"></div>
<svg style="left:613px;top:509px" width="10.5" height="10" viewBox="0 0 10.5 10"><rect x="2.800" y="2.500" width="5" height="5" fill="#c8c8c8"/></svg>
<div class="a" style="left:627.5px;top:509px;width:10.5px;height:10px;background:#6a6a6a;border-radius:1.500px;box-shadow:inset 0 0.500px 0 rgba(255,255,255,.12),0 0 0 0.500px #2a2a2a;"></div>
<svg style="left:627.5px;top:509px" width="10.5" height="10" viewBox="0 0 10.5 10"><path d="M2.800 2.500v5" stroke="#f2f2f2" stroke-width="1.200"/><path d="M4.500 2.500v5l3.500-2.500z" fill="none" stroke="#f2f2f2" stroke-width="1"/></svg>
<div class="a" style="left:642.3px;top:509px;width:10.5px;height:10px;background:#6a6a6a;border-radius:1.500px;box-shadow:inset 0 0.500px 0 rgba(255,255,255,.12),0 0 0 0.500px #2a2a2a;"></div>
<svg style="left:642.3px;top:509px" width="10.5" height="10" viewBox="0 0 10.5 10"><path d="M2.500 2v6l5.500-3z" fill="none" stroke="#f2f2f2" stroke-width="1.200"/><circle cx="2.500" cy="8" r="1" fill="#f2f2f2"/></svg>
<div class="a" style="left:664px;top:508px;width:1px;height:12px;background:#4a4a4a;"></div>
<span class="t" style="left:673px;top:510.7px;font-size:7px;color:#e6e6e6;font-weight:bold;letter-spacing:-0.28px;">Key</span>
<div class="a" style="left:695.6px;top:509px;width:10.6px;height:10px;background:#6a6a6a;border-radius:1.500px;box-shadow:inset 0 0.500px 0 rgba(255,255,255,.12),0 0 0 0.500px #2a2a2a;"></div>
<svg style="left:695.6px;top:509px" width="10.5" height="10" viewBox="0 0 10.5 10"><circle cx="3.500" cy="3" r="1.500" fill="#f2f2f2"/><path d="M3.500 3v5" stroke="#f2f2f2" stroke-width="1.200"/><path d="M9 2.500v5l-3.500-2.500z" fill="#f2f2f2"/></svg>
<div class="a" style="left:711px;top:509px;width:10.6px;height:10px;background:#6a6a6a;border-radius:1.500px;box-shadow:inset 0 0.500px 0 rgba(255,255,255,.12),0 0 0 0.500px #2a2a2a;"></div>
<svg style="left:711px;top:509px" width="10.5" height="10" viewBox="0 0 10.5 10"><circle cx="7.500" cy="3" r="1.500" fill="#f2f2f2"/><path d="M7.500 3v5" stroke="#f2f2f2" stroke-width="1.200"/><path d="M1.500 2.500v5l3.500-2.500z" fill="#f2f2f2"/></svg>
<div class="a" style="left:727.5px;top:509px;width:10.6px;height:10px;background:#585858;border-radius:1.500px;box-shadow:inset 0 0.500px 0 rgba(255,255,255,.12),0 0 0 0.500px #2a2a2a;"></div>
<svg style="left:727.5px;top:509px" width="10.5" height="10" viewBox="0 0 10.5 10"><rect x="3" y="2" width="4.500" height="6" fill="#686868"/></svg>
<div class="a" style="left:740px;top:509px;width:10.6px;height:10px;background:#585858;border-radius:1.500px;box-shadow:inset 0 0.500px 0 rgba(255,255,255,.12),0 0 0 0.500px #2a2a2a;"></div>
<svg style="left:740px;top:509px" width="10.5" height="10" viewBox="0 0 10.5 10"><rect x="3" y="2" width="4.500" height="6" fill="#686868"/></svg>
<div class="a" style="left:753px;top:509px;width:10.6px;height:10px;background:#6a6a6a;border-radius:1.500px;box-shadow:inset 0 0.500px 0 rgba(255,255,255,.12),0 0 0 0.500px #2a2a2a;"></div>
<svg style="left:753px;top:509px" width="10.5" height="10" viewBox="0 0 10.5 10"><circle cx="5.200" cy="3.800" r="2.600" fill="none" stroke="#f2f2f2" stroke-width="1"/><circle cx="5.200" cy="3.800" r="0.900" fill="#f2f2f2"/><rect x="1.500" y="7" width="7.500" height="2.500" fill="#f2f2f2"/></svg>
<div class="a" style="left:765.6px;top:509px;width:10.6px;height:10px;background:#e0101c;border-radius:1.500px;box-shadow:inset 0 0.500px 0 rgba(255,255,255,.12),0 0 0 0.500px #2a2a2a;"></div>
<div class="a" style="left:779px;top:509px;width:10.6px;height:10px;background:#6a6a6a;border-radius:1.500px;box-shadow:inset 0 0.500px 0 rgba(255,255,255,.12),0 0 0 0.500px #2a2a2a;"></div>
<span class="t" style="left:767.2px;top:509.1px;font-size:10.5px;color:#ffffff;font-weight:bold;">A</span>
<span class="t" style="left:781.3px;top:509.1px;font-size:10.5px;color:#ffffff;font-weight:bold;">0</span>
<svg style="left:510.5px;top:512.5px" width="7" height="11" viewBox="0 0 7 11"><path d="M0 0v11l2.600-2.400l1.900 4.400l1.900-0.800l-1.900-4.300h3.700z" fill="#111" stroke="#ddd" stroke-width="0.900" transform="scale(0.72)"/></svg>
<div class="a" style="left:140px;top:520.5px;width:658px;height:11.5px;background:#343434;"></div>
<span class="t" style="left:374px;top:522.9px;font-size:7px;color:#e6e6e6;font-weight:bold;letter-spacing:-0.36px;">Parameters</span>
<div class="a" style="left:782.0px;top:523.5px;width:7px;height:6.5px;background:#262626;border-radius:1px"></div>
<svg style="left:783.0px;top:524.0px" width="6" height="6" viewBox="0 0 6 6"><rect x="1.800" y="0.500" width="3.400" height="3.400" fill="#2a2a2a" stroke="#c8c8c8" stroke-width="0.700"/><rect x="0.500" y="2" width="3.200" height="3.200" fill="#2a2a2a" stroke="#c8c8c8" stroke-width="0.700"/></svg>
<div class="a" style="left:791.0px;top:523.5px;width:7px;height:6.5px;background:#262626;border-radius:1px"></div>
<svg style="left:792.8px;top:524.8px" width="3.5" height="4" viewBox="0 0 3.5 4"><path d="M0 0l3.500 4M3.500 0l-3.500 4" stroke="#dcdcdc" stroke-width="0.900"/></svg>
<div class="a" style="left:0px;top:532px;width:798px;height:1px;background:#242424;"></div>
<div class="a" style="left:0px;top:533px;width:798px;height:134px;background:#373737;"></div>
<div class="a" style="left:13.5px;top:547px;width:784px;height:119px;background:#3a3939;box-shadow:inset 0.700px 0.700px 0 #505050"></div>
<div class="a" style="left:0px;top:665.5px;width:798px;height:1.5px;background:#2a2a2a;"></div>
<div class="a" style="left:0px;top:533px;width:1.2px;height:133px;background:#1c1c1c;"></div>
<div class="a" style="left:1px;top:533px;width:12px;height:49px;background:#3a3939;border-radius:2px 0 0 2px;box-shadow:inset 0.700px 0.700px 0 #5a5a5a"></div>
<div class="a" style="left:1px;top:583px;width:12px;height:55px;background:#0c0c0c;border-radius:2px 0 0 2px"></div>
<span class="t" style="left:3px;top:577px;font-size:7px;font-weight:bold;color:#e6e6e6;transform-origin:0 0;transform:rotate(-90deg);letter-spacing:-0.080px">Parameters</span>
<span class="t" style="left:3px;top:633px;font-size:7px;font-weight:bold;color:#e6e6e6;transform-origin:0 0;transform:rotate(-90deg);letter-spacing:-0.150px">Curve Editor</span>
<div class="a" style="left:14px;top:536px;width:27px;height:11px;background:#0c0c0c;border-radius:2px 2px 0 0"></div>
<div class="a" style="left:41px;top:536px;width:29.5px;height:11.5px;background:#3a3939;border-radius:2px 2px 0 0;box-shadow:inset 0.700px 0.700px 0 #5a5a5a"></div>
<div class="a" style="left:70.75px;top:536px;width:52px;height:11px;background:#0c0c0c;border-radius:2px 2px 0 0"></div>
<div class="a" style="left:123.2px;top:536px;width:43px;height:11px;background:#0c0c0c;border-radius:2px 2px 0 0"></div>
<span class="t" style="left:21px;top:538.1px;font-size:7px;color:#e6e6e6;font-weight:bold;letter-spacing:-0.31px;">Clip</span>
<span class="t" style="left:47px;top:538.1px;font-size:7px;color:#e6e6e6;font-weight:bold;letter-spacing:-0.26px;">Track</span>
<span class="t" style="left:79px;top:538.1px;font-size:7px;color:#e6e6e6;font-weight:bold;letter-spacing:-0.19px;">AdjustTrack</span>
<span class="t" style="left:131px;top:538.1px;font-size:7px;color:#e6e6e6;font-weight:bold;letter-spacing:-0.04px;">Stabilize</span>
<span class="t" style="left:21.75px;top:555.9px;font-size:7px;color:#e6e6e6;font-weight:bold;letter-spacing:0.13px;">Input</span>
<div class="a" style="left:41.0px;top:559px;width:84.0px;height:0.8px;background:#4e4e4e;"></div>
<span class="t" style="left:133.75px;top:555.9px;font-size:7px;color:#e6e6e6;font-weight:bold;letter-spacing:-0.34px;">Preprocessing</span>
<div class="a" style="left:179.5px;top:559px;width:101.5px;height:0.8px;background:#4e4e4e;"></div>
<span class="t" style="left:289px;top:555.9px;font-size:7px;color:#e6e6e6;font-weight:bold;letter-spacing:0.18px;">Motion</span>
<div class="a" style="left:314.5px;top:559px;width:111.5px;height:0.8px;background:#4e4e4e;"></div>
<span class="t" style="left:434px;top:555.9px;font-size:7px;color:#e6e6e6;font-weight:bold;letter-spacing:-0.10px;">Search Area</span>
<div class="a" style="left:475.0px;top:559px;width:90.0px;height:0.8px;background:#4e4e4e;"></div>
<span class="t" style="left:572px;top:555.9px;font-size:7px;color:#e6e6e6;font-weight:bold;letter-spacing:-0.03px;">Export Data</span>
<div class="a" style="left:612.5px;top:559px;width:45.5px;height:0.8px;background:#4e4e4e;"></div>
<span class="t" style="left:27.5px;top:587.4px;font-size:7px;color:#e6e6e6;font-weight:bold;letter-spacing:-0.03px;">Input Clip</span>
<div class="a" style="left:28px;top:598.5px;width:94.5px;height:9.5px;background:#5c5c5c;border-radius:1.500px;background:linear-gradient(#686868,#5a5a5a);box-shadow:inset 0 0.500px 0 #747474,0 0 0 0.700px #303030"></div>
<div class="a" style="left:113.5px;top:599.5px;width:0.7px;height:7.5px;background:#777;"></div>
<svg style="left:116.0px;top:602.25px" width="4" height="2.5" viewBox="0 0 4 2.5"><path d="M0 0h4l-2 2.500z" fill="#777"/></svg>
<span class="t" style="left:43px;top:599.9px;font-size:7px;color:#727272;font-weight:bold;letter-spacing:-0.66px;">dancer</span>
<div class="a" style="left:33px;top:601.5px;width:3.5px;height:3.5px;background:#686868;"></div>
<div class="a" style="left:28.5px;top:614px;width:6.5px;height:6.5px;background:#444343;box-shadow:inset 0 0 0 0.700px #2e2e2e,0 0.500px 0 #4c4c4c"></div>
<span class="t" style="left:39px;top:614.4px;font-size:7px;color:#5a5959;font-weight:bold;letter-spacing:-0.22px;">Track Individual Fields</span>
<span class="t" style="left:139.5px;top:586.9px;font-size:7px;color:#e6e6e6;font-weight:bold;letter-spacing:-0.05px;">Input Channel</span>
<div class="a" style="left:139.5px;top:598px;width:74px;height:36.5px;background:#3a3939;border-radius:2px;box-shadow:inset 0 0 0 0.700px #4c4b4b,0 0 0 0.500px #2c2c2c"></div>
<div class="a" style="left:147.5px;top:607px;width:6px;height:6px;background:#2e2e2e;border-radius:50%;box-shadow:0 0 0 0.600px #4a4a4a"></div>
<div class="a" style="left:149.0px;top:608.5px;width:3px;height:3px;background:#6a6a6a;border-radius:50%"></div>
<span class="t" style="left:158px;top:606.7px;font-size:7px;color:#5a5959;font-weight:bold;letter-spacing:-0.22px;">Luminance</span>
<div class="a" style="left:147.5px;top:620px;width:6px;height:6px;background:#2e2e2e;border-radius:50%;box-shadow:0 0 0 0.600px #4a4a4a"></div>
<span class="t" style="left:158px;top:619.7px;font-size:7px;color:#5a5959;font-weight:bold;letter-spacing:-0.13px;">Auto Channel</span>
<span class="t" style="left:218px;top:586.9px;font-size:7px;color:#e6e6e6;font-weight:bold;letter-spacing:-0.15px;">Min % Pixels Used</span>
<div class="a" style="left:218px;top:598px;width:57.5px;height:9.5px;background:#3a3a3a;border-radius:1.500px;box-shadow:inset 0 0 0 0.700px #2b2b2b,0 0.600px 0 #4c4c4c"></div>
<span class="t" style="left:221px;top:599.4px;font-size:7px;color:#585858;font-weight:bold;">90</span>
<span class="t" style="left:218px;top:612.4px;font-size:7px;color:#e6e6e6;font-weight:bold;letter-spacing:-0.18px;">Smoothing Level</span>
<div class="a" style="left:218px;top:624.5px;width:57.5px;height:10px;background:#3a3a3a;border-radius:1.500px;box-shadow:inset 0 0 0 0.700px #2b2b2b,0 0.600px 0 #4c4c4c"></div>
<span class="t" style="left:221px;top:626.2px;font-size:7px;color:#585858;font-weight:bold;">0</span>
<div class="a" style="left:291px;top:576px;width:55px;height:68px;background:#3a3939;border-radius:2px;box-shadow:inset 0 0 0 0.700px #4c4b4b,0 0 0 0.500px #2c2c2c"></div>
<div class="a" style="left:294px;top:581.8px;width:6.5px;height:6.5px;background:#444343;box-shadow:inset 0 0 0 0.700px #2e2e2e,0 0.500px 0 #4c4c4c"></div>
<svg style="left:295px;top:582.8px" width="4.5" height="4.5" viewBox="0 0 4.5 4.5"><path d="M0 0l4.5 4.5M4.5 0l-4.5 4.5" stroke="#707070" stroke-width="1.100"/></svg>
<span class="t" style="left:304px;top:581.7px;font-size:7px;color:#5a5959;font-weight:bold;letter-spacing:-0.12px;">Translation</span>
<div class="a" style="left:294px;top:593.8px;width:6.5px;height:6.5px;background:#444343;box-shadow:inset 0 0 0 0.700px #2e2e2e,0 0.500px 0 #4c4c4c"></div>
<svg style="left:295px;top:594.8px" width="4.5" height="4.5" viewBox="0 0 4.5 4.5"><path d="M0 0l4.5 4.5M4.5 0l-4.5 4.5" stroke="#707070" stroke-width="1.100"/></svg>
<span class="t" style="left:304px;top:593.7px;font-size:7px;color:#5a5959;font-weight:bold;letter-spacing:-0.56px;">Scale</span>
<div class="a" style="left:294px;top:606.8px;width:6.5px;height:6.5px;background:#444343;box-shadow:inset 0 0 0 0.700px #2e2e2e,0 0.500px 0 #4c4c4c"></div>
<svg style="left:295px;top:607.8px" width="4.5" height="4.5" viewBox="0 0 4.5 4.5"><path d="M0 0l4.5 4.5M4.5 0l-4.5 4.5" stroke="#707070" stroke-width="1.100"/></svg>
<span class="t" style="left:304px;top:606.7px;font-size:7px;color:#5a5959;font-weight:bold;letter-spacing:-0.05px;">Rotation</span>
<div class="a" style="left:294px;top:619.8px;width:6.5px;height:6.5px;background:#444343;box-shadow:inset 0 0 0 0.700px #2e2e2e,0 0.500px 0 #4c4c4c"></div>
<svg style="left:295px;top:620.8px" width="4.5" height="4.5" viewBox="0 0 4.5 4.5"><path d="M0 0l4.5 4.5M4.5 0l-4.5 4.5" stroke="#707070" stroke-width="1.100"/></svg>
<span class="t" style="left:304px;top:619.7px;font-size:7px;color:#5a5959;font-weight:bold;letter-spacing:-0.29px;">Shear</span>
<div class="a" style="left:294px;top:632.8px;width:6.5px;height:6.5px;background:#444343;box-shadow:inset 0 0 0 0.700px #2e2e2e,0 0.500px 0 #4c4c4c"></div>
<span class="t" style="left:304px;top:632.7px;font-size:7px;color:#5a5959;font-weight:bold;letter-spacing:-0.30px;">Perspective</span>
<div class="a" style="left:352px;top:576px;width:74px;height:68px;background:#3a3939;border-radius:2px;box-shadow:inset 0 0 0 0.700px #4c4b4b,0 0 0 0.500px #2c2c2c"></div>
<div class="a" style="left:360px;top:589.5px;width:6px;height:6px;background:#2e2e2e;border-radius:50%;box-shadow:0 0 0 0.600px #4a4a4a"></div>
<div class="a" style="left:361.5px;top:591.0px;width:3px;height:3px;background:#6a6a6a;border-radius:50%"></div>
<span class="t" style="left:370.5px;top:589.2px;font-size:7px;color:#5a5959;font-weight:bold;letter-spacing:0.05px;">Large Motion</span>
<div class="a" style="left:360px;top:606.5px;width:6px;height:6px;background:#2e2e2e;border-radius:50%;box-shadow:0 0 0 0.600px #4a4a4a"></div>
<span class="t" style="left:370.5px;top:606.2px;font-size:7px;color:#5a5959;font-weight:bold;letter-spacing:0.04px;">Small Motion</span>
<div class="a" style="left:360px;top:624.5px;width:6px;height:6px;background:#2e2e2e;border-radius:50%;box-shadow:0 0 0 0.600px #4a4a4a"></div>
<span class="t" style="left:370.5px;top:624.2px;font-size:7px;color:#5a5959;font-weight:bold;letter-spacing:-0.03px;">Manual Track</span>
<span class="t" style="left:437px;top:584.4px;font-size:7px;color:#e6e6e6;font-weight:bold;letter-spacing:0.00px;">Horizontal</span>
<div class="a" style="left:437px;top:597px;width:44px;height:10.5px;background:#3a3a3a;border-radius:1.500px;box-shadow:inset 0 0 0 0.700px #2b2b2b,0 0.600px 0 #4c4c4c"></div>
<span class="t" style="left:440px;top:598.9px;font-size:7px;color:#585858;font-weight:bold;">100</span>
<div class="a" style="left:485px;top:598.5px;width:6.5px;height:6.5px;background:#444343;box-shadow:inset 0 0 0 0.700px #2e2e2e,0 0.500px 0 #4c4c4c"></div>
<svg style="left:486px;top:599.5px" width="4.5" height="4.5" viewBox="0 0 4.5 4.5"><path d="M0 0l4.5 4.5M4.5 0l-4.5 4.5" stroke="#707070" stroke-width="1.100"/></svg>
<span class="t" style="left:495.4px;top:598.4px;font-size:7px;color:#5a5959;font-weight:bold;letter-spacing:-0.34px;">Auto</span>
<span class="t" style="left:437px;top:614.2px;font-size:7px;color:#e6e6e6;font-weight:bold;letter-spacing:-0.15px;">Vertical</span>
<div class="a" style="left:437px;top:627px;width:44px;height:10.5px;background:#3a3a3a;border-radius:1.500px;box-shadow:inset 0 0 0 0.700px #2b2b2b,0 0.600px 0 #4c4c4c"></div>
<span class="t" style="left:440px;top:628.9px;font-size:7px;color:#585858;font-weight:bold;">100</span>
<div class="a" style="left:485px;top:628.5px;width:6.5px;height:6.5px;background:#444343;box-shadow:inset 0 0 0 0.700px #2e2e2e,0 0.500px 0 #4c4c4c"></div>
<svg style="left:486px;top:629.5px" width="4.5" height="4.5" viewBox="0 0 4.5 4.5"><path d="M0 0l4.5 4.5M4.5 0l-4.5 4.5" stroke="#707070" stroke-width="1.100"/></svg>
<span class="t" style="left:495.4px;top:628.4px;font-size:7px;color:#5a5959;font-weight:bold;letter-spacing:-0.34px;">Auto</span>
<span class="t" style="left:520.75px;top:584.4px;font-size:7px;color:#e6e6e6;font-weight:bold;letter-spacing:-0.12px;">Angle</span>
<div class="a" style="left:520.75px;top:597px;width:42.5px;height:10.5px;background:#3a3a3a;border-radius:1.500px;box-shadow:inset 0 0 0 0.700px #2b2b2b,0 0.600px 0 #4c4c4c"></div>
<span class="t" style="left:523.75px;top:598.9px;font-size:7px;color:#585858;font-weight:bold;">0</span>
<span class="t" style="left:520.75px;top:614.2px;font-size:7px;color:#e6e6e6;font-weight:bold;letter-spacing:-0.10px;">Zoom %</span>
<div class="a" style="left:520.75px;top:627px;width:42.5px;height:10.5px;background:#3a3a3a;border-radius:1.500px;box-shadow:inset 0 0 0 0.700px #2b2b2b,0 0.600px 0 #4c4c4c"></div>
<span class="t" style="left:523.75px;top:628.9px;font-size:7px;color:#585858;font-weight:bold;">0</span>
<div class="a" style="left:575.3px;top:597.5px;width:79.3px;height:12px;background:#6a6a6a;border-radius:1.500px;box-shadow:inset 0 0.500px 0 rgba(255,255,255,.12),0 0 0 0.500px #2a2a2a;"></div>
<span class="t" style="left:580px;top:599.9px;font-size:7px;color:#8a8a8a;font-weight:bold;letter-spacing:-0.26px;">Export Tracking Data...</span>
<div class="a" style="left:575.3px;top:616.5px;width:79.3px;height:12.5px;background:#6a6a6a;border-radius:1.500px;box-shadow:inset 0 0.500px 0 rgba(255,255,255,.12),0 0 0 0.500px #2a2a2a;"></div>
<span class="t" style="left:583px;top:619.2px;font-size:7px;color:#8a8a8a;font-weight:bold;letter-spacing:-0.25px;">Export Shape Data...</span>
<div class="a" style="left:797.5px;top:548px;width:2.5px;height:119px;background:#8a1850;"></div>
<span class="t" style="left:13px;top:627px;font-family:'Liberation Serif',serif;color:#d2d2d2;opacity:.92;font-size:12.500px;letter-spacing:0.050px;-webkit-text-stroke:0.250px #d2d2d2">Steve Wright’s</span>
<span class="t" style="left:22.500px;top:645.500px;font-family:'Liberation Serif',serif;color:#d2d2d2;opacity:.92;font-size:11.500px;font-style:italic;letter-spacing:-0.600px">vfx</span>
<span class="t" style="left:35px;top:637.400px;font-family:'Liberation Serif',serif;color:#d2d2d2;opacity:.92;font-size:21px;letter-spacing:-0.300px">IO</span>
<span class="t" style="left:57.500px;top:645.700px;font-size:11px;font-style:italic;color:#d2d2d2;opacity:.92;letter-spacing:-0.700px">.com</span>
</div>
</body></html>
